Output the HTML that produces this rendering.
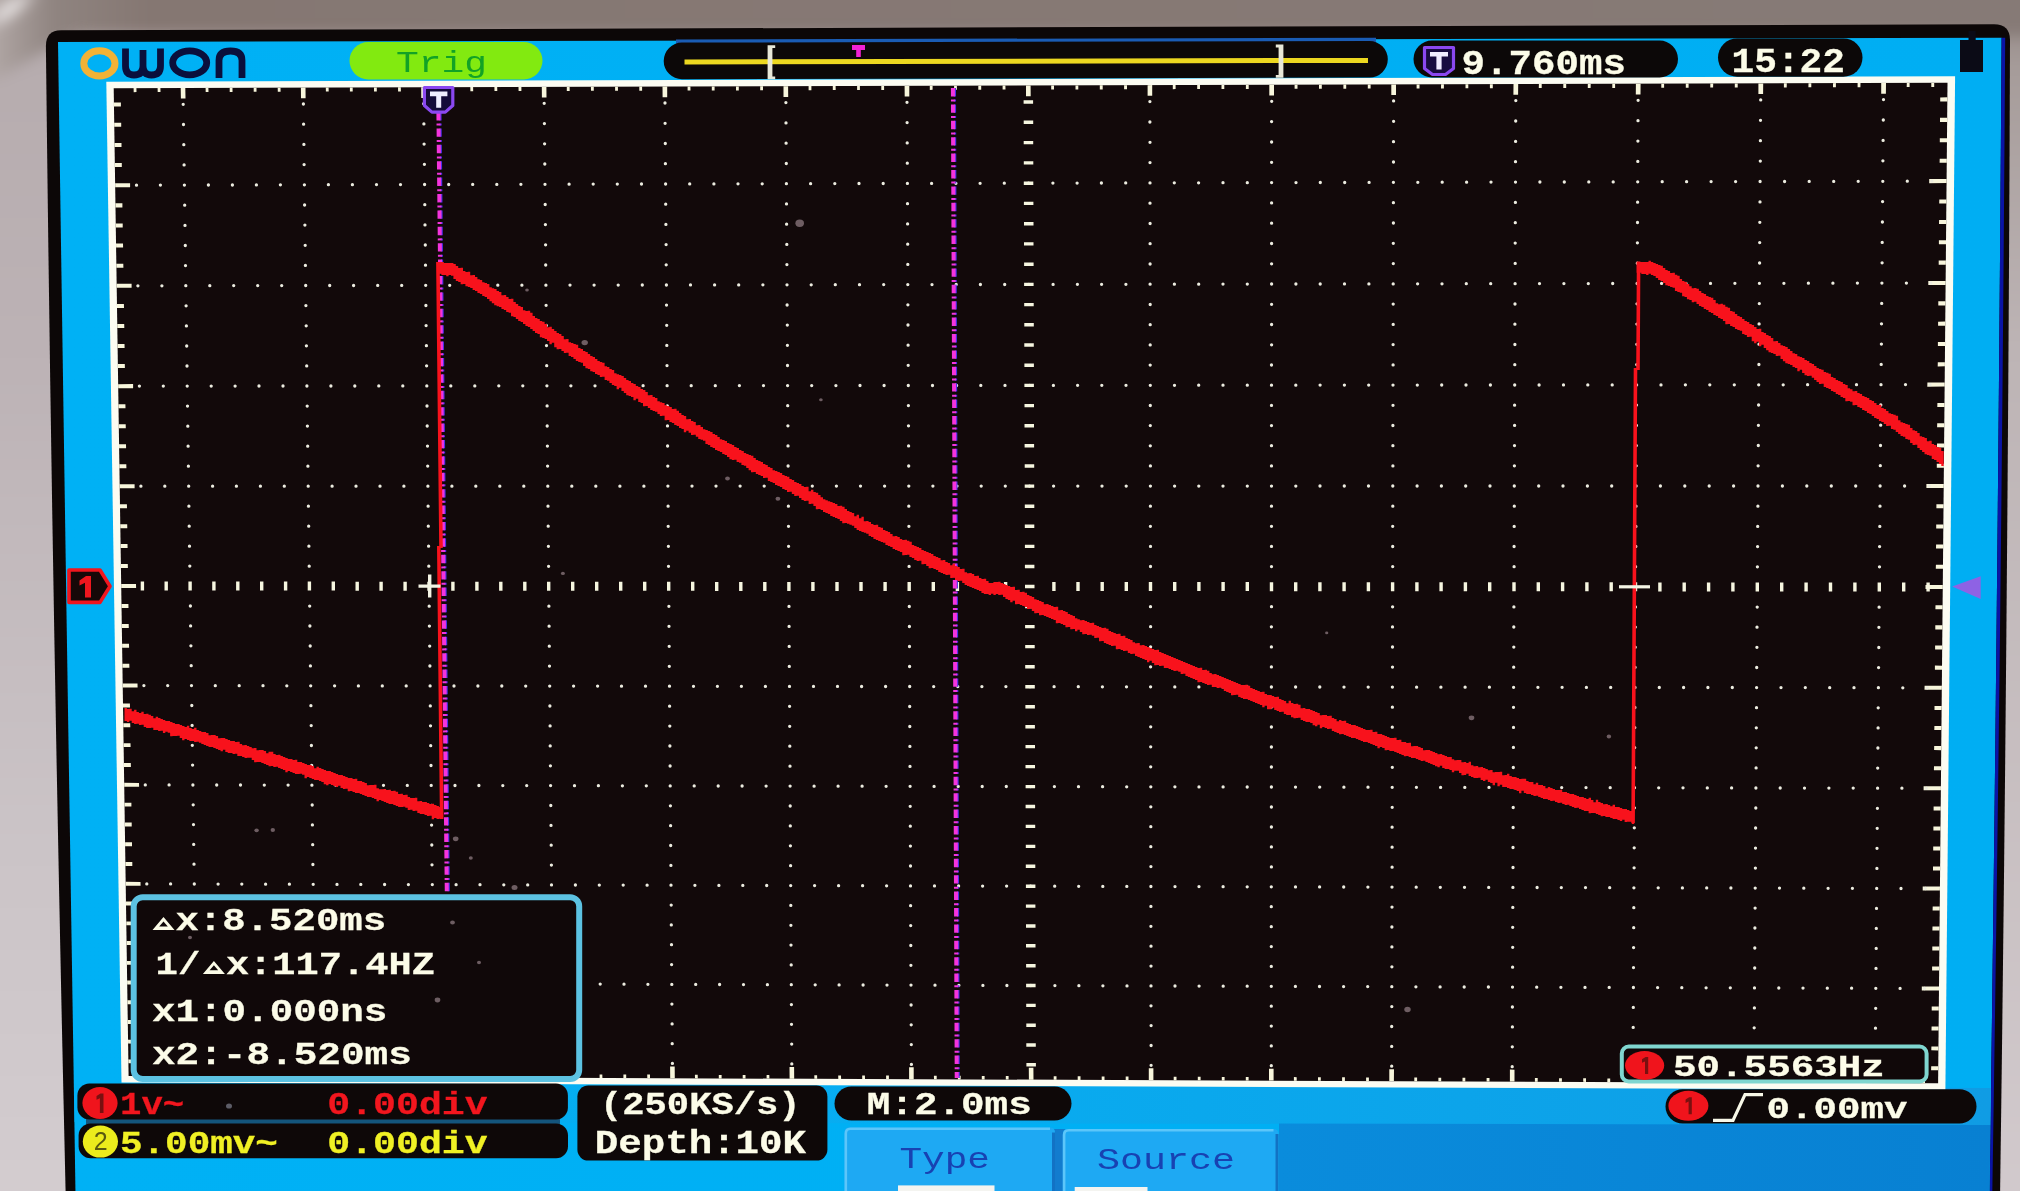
<!DOCTYPE html>
<html><head><meta charset="utf-8"><title>OWON oscilloscope</title>
<style>html,body{margin:0;padding:0;background:#c4bbbe;overflow:hidden}body{width:2020px;height:1191px;font-family:"Liberation Sans",sans-serif}svg{display:block}</style>
</head><body>
<svg width="2020" height="1191" viewBox="0 0 2020 1191">
<defs>
<linearGradient id="gtop" x1="0" y1="0" x2="1" y2="0"><stop offset="0" stop-color="#c9c1c1"/><stop offset="0.018" stop-color="#aea4a2"/><stop offset="0.045" stop-color="#8f8480"/><stop offset="0.09" stop-color="#857772"/><stop offset="1" stop-color="#867a76"/></linearGradient>
<linearGradient id="gleft" x1="0" y1="0" x2="0" y2="1"><stop offset="0" stop-color="#a39a99"/><stop offset="0.07" stop-color="#b6acae"/><stop offset="0.3" stop-color="#bcb2b5"/><stop offset="0.7" stop-color="#cbc4c7"/><stop offset="1" stop-color="#d4cdd0"/></linearGradient>
<linearGradient id="gright" x1="0" y1="0" x2="0" y2="1"><stop offset="0" stop-color="#8a7f7b"/><stop offset="0.08" stop-color="#a69c9a"/><stop offset="0.3" stop-color="#bdb4b5"/><stop offset="1" stop-color="#d2cacd"/></linearGradient>
<linearGradient id="gblue" x1="0" y1="0" x2="1" y2="0"><stop offset="0" stop-color="#00b1f5"/><stop offset="1" stop-color="#00aef3"/></linearGradient>
<linearGradient id="gband" x1="0" y1="0" x2="1" y2="0"><stop offset="0" stop-color="#00b0f4"/><stop offset="0.45" stop-color="#08acf0"/><stop offset="1" stop-color="#109ce4"/></linearGradient>
<linearGradient id="gmenu" x1="0" y1="0" x2="1" y2="0"><stop offset="0" stop-color="#0a8cdc"/><stop offset="1" stop-color="#0880d2"/></linearGradient>
<radialGradient id="ghl" cx="0.5" cy="0.5" r="0.5"><stop offset="0" stop-color="#fbf9f9"/><stop offset="0.45" stop-color="#e4dfdf" stop-opacity="0.85"/><stop offset="1" stop-color="#c0b8b8" stop-opacity="0"/></radialGradient>
<filter id="soft" color-interpolation-filters="sRGB" x="0" y="0" width="100%" height="100%" filterUnits="userSpaceOnUse"><feGaussianBlur stdDeviation="0.65"/></filter>
<filter id="bgblur" color-interpolation-filters="sRGB" x="-5%" y="-5%" width="110%" height="110%"><feGaussianBlur stdDeviation="7"/></filter>
</defs>
<rect width="2020" height="1191" fill="#c4bbbe"/>
<g filter="url(#bgblur)">
<rect x="-30" y="-30" width="110" height="1260" fill="url(#gleft)"/>
<rect x="1985" y="-30" width="70" height="1260" fill="url(#gright)"/>
<path d="M-40,-40 H2060 V36 H70 L-40,100Z" fill="url(#gtop)"/>
<ellipse cx="10" cy="9" rx="40" ry="11" fill="url(#ghl)" transform="rotate(-36 10 9)"/>
</g>
<g filter="url(#soft)">
<path d="M45.9,46 Q45.9,30.4 61,30.3 L1994,24.3 Q2010,24.3 2010,40 Q2008,620 2000,1200 L65.8,1200 Q52.2,615 45.9,46Z" fill="#0c0707"/>
<path d="M58,42 L2001.6,37.8 Q1998,600 1989.5,1200 L75.6,1200 L66.3,600Z" fill="url(#gblue)"/>
<path d="M2001.6,37.8 L2005.2,37.8 Q2001.8,600 1992.2,1200 L1989.5,1200 Q1998,600 2001.6,37.8Z" fill="#0a14a4"/>
<path d="M74,1084 L1991,1088 L1990.4,1125 L74.6,1122Z" fill="url(#gband)"/>
<path d="M1279,1123.4 L1990.4,1125 L1989.5,1200 L1279,1200Z" fill="url(#gmenu)"/>
<polygon points="106.3,81.7 1955.1,76.3 1945.4,1089.7 121.5,1082.4" fill="#fcfcf2"/>
<polygon points="113.7,88.2 1947.5,82.8 1938.1,1083.3 128.6,1076.1" fill="#12090a"/>
<path d="M133.6,88.1 136.4,88.1 136.5,92.1 133.7,92.2ZM148.3,1076.2 151,1076.2 151,1072.7 148.2,1072.6ZM157.6,88 160.4,88 160.5,92.1 157.7,92.1ZM172,1076.3 174.7,1076.3 174.7,1072.7 171.9,1072.7ZM180.7,88 185.3,88 185.5,98.6 180.9,98.6ZM194.8,1076.4 199.3,1076.4 199.1,1064.6 194.6,1064.6ZM205.6,87.9 208.4,87.9 208.5,91.9 205.7,91.9ZM219.4,1076.5 222.1,1076.5 222.1,1072.9 219.3,1072.9ZM229.7,87.8 232.5,87.8 232.5,91.9 229.7,91.9ZM243.1,1076.6 245.8,1076.6 245.8,1073 243,1073ZM253.7,87.8 256.5,87.8 256.5,91.8 253.7,91.8ZM266.8,1076.7 269.5,1076.7 269.5,1073.1 266.7,1073.1ZM277.7,87.7 280.5,87.7 280.6,91.7 277.8,91.7ZM290.5,1076.7 293.3,1076.8 293.2,1073.2 290.5,1073.2ZM300.9,87.6 305.5,87.6 305.6,98.2 301,98.2ZM313.3,1076.8 317.9,1076.9 317.7,1065 313.2,1065ZM325.8,87.6 328.6,87.5 328.7,91.6 325.9,91.6ZM338,1076.9 340.7,1076.9 340.7,1073.4 337.9,1073.4ZM349.9,87.5 352.7,87.5 352.7,91.5 349.9,91.5ZM361.7,1077 364.5,1077 364.4,1073.5 361.7,1073.5ZM374,87.4 376.8,87.4 376.8,91.5 374,91.5ZM385.5,1077.1 388.2,1077.1 388.2,1073.6 385.4,1073.6ZM398,87.3 400.8,87.3 400.9,91.4 398.1,91.4ZM409.2,1077.2 412,1077.2 412,1073.7 409.2,1073.7ZM421.2,87.3 425.8,87.3 425.9,97.9 421.3,97.9ZM432.1,1077.3 436.7,1077.3 436.5,1065.5 432,1065.5ZM446.2,87.2 449,87.2 449.1,91.2 446.3,91.3ZM456.8,1077.4 459.5,1077.4 459.5,1073.9 456.7,1073.9ZM470.3,87.1 473.1,87.1 473.2,91.2 470.4,91.2ZM480.6,1077.5 483.3,1077.5 483.3,1074 480.5,1073.9ZM494.4,87.1 497.2,87.1 497.3,91.1 494.5,91.1ZM504.3,1077.6 507.1,1077.6 507.1,1074.1 504.3,1074ZM518.5,87 521.4,87 521.4,91 518.6,91ZM528.1,1077.7 530.9,1077.7 530.9,1074.1 528.1,1074.1ZM541.8,86.9 546.4,86.9 546.5,97.5 541.9,97.6ZM551.1,1077.8 555.6,1077.8 555.5,1066 551,1065.9ZM566.8,86.9 569.6,86.8 569.7,90.9 566.8,90.9ZM575.8,1077.9 578.5,1077.9 578.5,1074.3 575.7,1074.3ZM590.9,86.8 593.8,86.8 593.8,90.8 591,90.8ZM599.6,1078 602.4,1078 602.3,1074.4 599.6,1074.4ZM615.1,86.7 617.9,86.7 618,90.8 615.1,90.8ZM623.4,1078.1 626.2,1078.1 626.2,1074.5 623.4,1074.5ZM639.3,86.6 642.1,86.6 642.1,90.7 639.3,90.7ZM647.3,1078.2 650,1078.2 650,1074.6 647.2,1074.6ZM662.5,86.6 667.2,86.6 667.2,97.2 662.6,97.2ZM670.2,1078.2 674.8,1078.3 674.7,1066.4 670.1,1066.4ZM687.6,86.5 690.4,86.5 690.5,90.5 687.6,90.6ZM695,1078.3 697.8,1078.4 697.7,1074.8 694.9,1074.8ZM711.8,86.4 714.6,86.4 714.6,90.5 711.8,90.5ZM718.8,1078.4 721.6,1078.4 721.6,1074.9 718.8,1074.9ZM736,86.4 738.8,86.4 738.8,90.4 736,90.4ZM742.7,1078.5 745.5,1078.5 745.5,1075 742.7,1075ZM760.2,86.3 763,86.3 763,90.3 760.2,90.3ZM766.6,1078.6 769.4,1078.6 769.3,1075.1 766.6,1075.1ZM783.5,86.2 788.1,86.2 788.2,96.9 783.5,96.9ZM789.6,1078.7 794.2,1078.7 794.1,1066.9 789.5,1066.9ZM808.6,86.1 811.4,86.1 811.4,90.2 808.6,90.2ZM814.4,1078.8 817.2,1078.8 817.1,1075.3 814.3,1075.3ZM832.8,86.1 835.6,86.1 835.7,90.1 832.8,90.1ZM838.3,1078.9 841.1,1078.9 841,1075.4 838.2,1075.4ZM857.1,86 859.9,86 859.9,90.1 857.1,90.1ZM862.2,1079 865,1079 864.9,1075.5 862.2,1075.4ZM881.3,85.9 884.1,85.9 884.1,90 881.3,90ZM886.1,1079.1 888.9,1079.1 888.9,1075.6 886.1,1075.5ZM904.6,85.9 909.3,85.9 909.3,96.5 904.7,96.5ZM909.1,1079.2 913.7,1079.2 913.7,1067.3 909.1,1067.3ZM929.8,85.8 932.6,85.8 932.6,89.8 929.8,89.9ZM934,1079.3 936.7,1079.3 936.7,1075.7 933.9,1075.7ZM954.1,85.7 956.9,85.7 956.9,89.8 954.1,89.8ZM957.9,1079.4 960.7,1079.4 960.7,1075.8 957.9,1075.8ZM978.3,85.7 981.2,85.6 981.2,89.7 978.3,89.7ZM981.8,1079.5 984.6,1079.5 984.6,1075.9 981.8,1075.9ZM1002.6,85.6 1005.4,85.6 1005.5,89.6 1002.6,89.6ZM1005.8,1079.6 1008.6,1079.6 1008.6,1076 1005.8,1076ZM1026,85.5 1030.6,85.5 1030.7,96.2 1026,96.2ZM1028.9,1079.7 1033.5,1079.7 1033.4,1067.8 1028.8,1067.8ZM1051.2,85.4 1054,85.4 1054,89.5 1051.2,89.5ZM1053.7,1079.8 1056.5,1079.8 1056.5,1076.2 1053.7,1076.2ZM1075.5,85.4 1078.3,85.4 1078.3,89.4 1075.5,89.4ZM1077.7,1079.9 1080.5,1079.9 1080.5,1076.3 1077.7,1076.3ZM1099.8,85.3 1102.7,85.3 1102.7,89.4 1099.8,89.4ZM1101.7,1079.9 1104.5,1080 1104.5,1076.4 1101.7,1076.4ZM1124.1,85.2 1127,85.2 1127,89.3 1124.1,89.3ZM1125.7,1080 1128.5,1080.1 1128.5,1076.5 1125.7,1076.5ZM1147.6,85.2 1152.2,85.1 1152.2,95.8 1147.6,95.8ZM1148.8,1080.1 1153.4,1080.2 1153.4,1068.3 1148.8,1068.2ZM1172.8,85.1 1175.6,85.1 1175.6,89.1 1172.8,89.2ZM1173.7,1080.2 1176.5,1080.2 1176.5,1076.7 1173.7,1076.7ZM1197.2,85 1200,85 1200,89.1 1197.2,89.1ZM1197.8,1080.3 1200.6,1080.3 1200.6,1076.8 1197.8,1076.8ZM1221.5,84.9 1224.3,84.9 1224.3,89 1221.5,89ZM1221.8,1080.4 1224.6,1080.4 1224.6,1076.9 1221.8,1076.9ZM1245.9,84.9 1248.7,84.9 1248.7,88.9 1245.9,88.9ZM1245.8,1080.5 1248.6,1080.5 1248.6,1077 1245.8,1077ZM1269.3,84.8 1274,84.8 1274,95.5 1269.3,95.5ZM1269,1080.6 1273.6,1080.6 1273.6,1068.7 1269,1068.7ZM1294.6,84.7 1297.5,84.7 1297.5,88.8 1294.6,88.8ZM1293.9,1080.7 1296.7,1080.7 1296.7,1077.2 1293.9,1077.1ZM1319,84.7 1321.8,84.6 1321.8,88.7 1319,88.7ZM1318,1080.8 1320.8,1080.8 1320.8,1077.2 1318,1077.2ZM1343.4,84.6 1346.2,84.6 1346.2,88.7 1343.4,88.7ZM1342.1,1080.9 1344.9,1080.9 1344.9,1077.3 1342.1,1077.3ZM1367.8,84.5 1370.6,84.5 1370.6,88.6 1367.8,88.6ZM1366.1,1081 1368.9,1081 1368.9,1077.4 1366.1,1077.4ZM1391.3,84.4 1396,84.4 1396,95.1 1391.3,95.1ZM1389.3,1081.1 1393.9,1081.1 1394,1069.2 1389.3,1069.2ZM1416.6,84.4 1419.5,84.4 1419.5,88.4 1416.6,88.4ZM1414.3,1081.2 1417.1,1081.2 1417.1,1077.6 1414.3,1077.6ZM1441.1,84.3 1443.9,84.3 1443.9,88.4 1441,88.4ZM1438.4,1081.3 1441.2,1081.3 1441.2,1077.7 1438.4,1077.7ZM1465.5,84.2 1468.3,84.2 1468.3,88.3 1465.5,88.3ZM1462.5,1081.4 1465.3,1081.4 1465.3,1077.8 1462.5,1077.8ZM1489.9,84.2 1492.8,84.2 1492.8,88.2 1489.9,88.2ZM1486.6,1081.5 1489.5,1081.5 1489.5,1077.9 1486.6,1077.9ZM1513.5,84.1 1518.2,84.1 1518.1,94.8 1513.4,94.8ZM1509.9,1081.6 1514.5,1081.6 1514.5,1069.7 1509.9,1069.6ZM1538.9,84 1541.7,84 1541.7,88.1 1538.8,88.1ZM1534.9,1081.7 1537.7,1081.7 1537.7,1078.1 1534.9,1078.1ZM1563.3,83.9 1566.2,83.9 1566.2,88 1563.3,88ZM1559,1081.8 1561.9,1081.8 1561.9,1078.2 1559.1,1078.2ZM1587.8,83.9 1590.7,83.9 1590.6,87.9 1587.8,88ZM1583.2,1081.8 1586,1081.9 1586,1078.3 1583.2,1078.3ZM1612.3,83.8 1615.1,83.8 1615.1,87.9 1612.3,87.9ZM1607.3,1081.9 1610.2,1082 1610.2,1078.4 1607.4,1078.4ZM1635.9,83.7 1640.6,83.7 1640.5,94.4 1635.8,94.5ZM1630.6,1082 1635.2,1082.1 1635.3,1070.1 1630.7,1070.1ZM1661.3,83.7 1664.1,83.7 1664.1,87.7 1661.3,87.7ZM1655.7,1082.1 1658.5,1082.1 1658.5,1078.6 1655.7,1078.6ZM1685.8,83.6 1688.6,83.6 1688.6,87.7 1685.8,87.7ZM1679.9,1082.2 1682.7,1082.2 1682.7,1078.7 1679.9,1078.7ZM1710.3,83.5 1713.2,83.5 1713.1,87.6 1710.3,87.6ZM1704.1,1082.3 1706.9,1082.3 1706.9,1078.8 1704.1,1078.7ZM1734.8,83.4 1737.7,83.4 1737.7,87.5 1734.8,87.5ZM1728.3,1082.4 1731.1,1082.4 1731.1,1078.9 1728.3,1078.8ZM1758.4,83.4 1763.2,83.4 1763.1,94.1 1758.4,94.1ZM1751.5,1082.5 1756.2,1082.5 1756.3,1070.6 1751.6,1070.6ZM1783.9,83.3 1786.8,83.3 1786.7,87.4 1783.9,87.4ZM1776.7,1082.6 1779.5,1082.6 1779.5,1079 1776.7,1079ZM1808.5,83.2 1811.3,83.2 1811.3,87.3 1808.4,87.3ZM1800.9,1082.7 1803.7,1082.7 1803.7,1079.1 1800.9,1079.1ZM1833,83.2 1835.9,83.1 1835.9,87.2 1833,87.2ZM1825.1,1082.8 1827.9,1082.8 1828,1079.2 1825.2,1079.2ZM1857.6,83.1 1860.5,83.1 1860.4,87.2 1857.6,87.2ZM1849.4,1082.9 1852.2,1082.9 1852.2,1079.3 1849.4,1079.3ZM1881.2,83 1886,83 1885.9,93.7 1881.2,93.8ZM1872.7,1083 1877.3,1083 1877.4,1071.1 1872.8,1071ZM1906.8,82.9 1909.6,82.9 1909.6,87 1906.7,87ZM1897.9,1083.1 1900.7,1083.1 1900.7,1079.5 1897.9,1079.5ZM1931.3,82.9 1934.2,82.9 1934.2,87 1931.3,87ZM1922.1,1083.2 1925,1083.2 1925,1079.6 1922.2,1079.6ZM113.9,102.5 120.9,102.5 120.9,106.5 113.9,106.6ZM1947.4,97.3 1940.2,97.4 1940.2,101.5 1947.4,101.4ZM114.2,122.7 121.2,122.7 121.2,126.7 114.2,126.7ZM1947.2,117.8 1940,117.8 1940,121.9 1947.2,121.9ZM114.5,142.9 121.5,142.9 121.5,146.9 114.5,146.9ZM1947,138.2 1939.8,138.2 1939.8,142.3 1947,142.3ZM114.8,163 121.8,163 121.8,167.1 114.9,167.1ZM1946.8,158.7 1939.7,158.7 1939.6,162.8 1946.8,162.7ZM115.1,183.2 130.1,183.2 130.1,187.2 115.2,187.2ZM1946.6,179.1 1929.2,179.1 1929.2,183.2 1946.6,183.1ZM115.4,203.3 122.4,203.3 122.4,207.4 115.5,207.4ZM1946.4,199.5 1939.3,199.5 1939.2,203.6 1946.4,203.5ZM115.7,223.5 122.7,223.5 122.7,227.5 115.8,227.5ZM1946.2,219.9 1939.1,219.9 1939,224 1946.2,223.9ZM116,243.6 123,243.6 123.1,247.6 116.1,247.6ZM1946.1,240.2 1938.9,240.3 1938.9,244.3 1946,244.3ZM116.3,263.7 123.3,263.7 123.4,267.7 116.4,267.7ZM1945.9,260.6 1938.7,260.6 1938.7,264.7 1945.8,264.7ZM116.6,283.8 131.6,283.8 131.6,287.8 116.7,287.8ZM1945.7,281 1928.3,281 1928.3,285.1 1945.6,285ZM116.9,303.9 123.9,303.9 124,307.9 117,307.9ZM1945.5,301.3 1938.3,301.3 1938.3,305.4 1945.4,305.4ZM117.2,324 124.2,324 124.3,328 117.3,328ZM1945.3,321.6 1938.1,321.7 1938.1,325.7 1945.2,325.7ZM117.5,344.1 124.5,344 124.6,348.1 117.6,348.1ZM1945.1,342 1937.9,342 1937.9,346 1945.1,346ZM117.8,364.1 124.8,364.1 124.9,368.1 117.9,368.1ZM1944.9,362.3 1937.8,362.3 1937.7,366.4 1944.9,366.3ZM118.1,384.2 133.1,384.1 133.1,388.2 118.2,388.2ZM1944.7,382.6 1927.4,382.6 1927.3,386.7 1944.7,386.6ZM118.4,404.2 125.4,404.2 125.5,408.2 118.5,408.2ZM1944.5,402.9 1937.4,402.9 1937.3,406.9 1944.5,406.9ZM118.7,424.2 125.7,424.2 125.8,428.2 118.8,428.2ZM1944.3,423.2 1937.2,423.2 1937.1,427.2 1944.3,427.2ZM119,444.2 126,444.2 126.1,448.2 119.1,448.2ZM1944.1,443.4 1937,443.4 1937,447.5 1944.1,447.5ZM119.3,464.2 126.3,464.2 126.4,468.2 119.4,468.2ZM1943.9,463.7 1936.8,463.7 1936.8,467.7 1943.9,467.7ZM119.6,484.2 134.6,484.2 134.6,488.2 119.7,488.2ZM1943.8,483.9 1926.4,483.9 1926.4,488 1943.7,488ZM119.9,504.2 126.9,504.2 127,508.2 120,508.2ZM1943.6,504.2 1936.4,504.2 1936.4,508.2 1943.5,508.2ZM120.2,524.2 127.2,524.2 127.3,528.2 120.3,528.2ZM1943.4,524.4 1936.2,524.4 1936.2,528.4 1943.3,528.4ZM120.6,544.1 127.5,544.1 127.6,548.1 120.6,548.1ZM1943.2,544.6 1936.1,544.6 1936,548.6 1943.1,548.6ZM120.9,564.1 127.8,564.1 127.9,568.1 120.9,568.1ZM1943,564.8 1935.9,564.8 1935.8,568.8 1943,568.8ZM121.2,584 136,584 136.1,588 121.2,588ZM1942.8,585 1925.5,585 1925.5,589 1942.8,589ZM121.5,604 128.4,604 128.5,608 121.5,607.9ZM1942.6,605.2 1935.5,605.2 1935.4,609.2 1942.6,609.2ZM121.8,623.9 128.7,623.9 128.8,627.9 121.8,627.9ZM1942.4,625.3 1935.3,625.3 1935.3,629.4 1942.4,629.4ZM122.1,643.8 129,643.8 129.1,647.8 122.1,647.8ZM1942.2,645.5 1935.1,645.5 1935.1,649.5 1942.2,649.5ZM122.4,663.7 129.3,663.7 129.4,667.7 122.4,667.7ZM1942,665.7 1934.9,665.6 1934.9,669.7 1942,669.7ZM122.7,683.6 137.5,683.6 137.6,687.6 122.7,687.5ZM1941.9,685.8 1924.6,685.8 1924.5,689.8 1941.8,689.8ZM123,703.4 129.9,703.5 130,707.4 123,707.4ZM1941.7,705.9 1934.5,705.9 1934.5,709.9 1941.6,709.9ZM123.3,723.3 130.2,723.3 130.3,727.3 123.3,727.3ZM1941.5,726 1934.4,726 1934.3,730 1941.4,730.1ZM123.6,743.2 130.5,743.2 130.6,747.1 123.6,747.1ZM1941.3,746.1 1934.2,746.1 1934.1,750.1 1941.2,750.2ZM123.9,763 130.8,763 130.9,767 123.9,767ZM1941.1,766.2 1934,766.2 1933.9,770.2 1941.1,770.2ZM124.2,782.8 139,782.9 139.1,786.8 124.2,786.8ZM1940.9,786.3 1923.6,786.3 1923.6,790.3 1940.9,790.3ZM124.5,802.7 131.4,802.7 131.4,806.6 124.5,806.6ZM1940.7,806.4 1933.6,806.4 1933.6,810.4 1940.7,810.4ZM124.8,822.5 131.7,822.5 131.7,826.5 124.8,826.4ZM1940.5,826.4 1933.4,826.4 1933.4,830.4 1940.5,830.5ZM125.1,842.3 132,842.3 132,846.3 125.1,846.2ZM1940.3,846.5 1933.2,846.5 1933.2,850.5 1940.3,850.5ZM125.4,862.1 132.3,862.1 132.3,866 125.4,866ZM1940.1,866.5 1933,866.5 1933,870.5 1940.1,870.5ZM125.7,881.8 140.5,881.9 140.6,885.8 125.7,885.8ZM1940,886.6 1922.7,886.5 1922.7,890.5 1939.9,890.6ZM126,901.6 132.9,901.6 132.9,905.6 126,905.6ZM1939.8,906.6 1932.7,906.6 1932.6,910.6 1939.7,910.6ZM126.3,921.4 133.2,921.4 133.2,925.3 126.3,925.3ZM1939.6,926.6 1932.5,926.6 1932.4,930.6 1939.5,930.6ZM126.6,941.1 133.5,941.1 133.5,945.1 126.6,945.1ZM1939.4,946.6 1932.3,946.6 1932.3,950.6 1939.4,950.6ZM126.8,960.9 133.8,960.9 133.8,964.8 126.9,964.8ZM1939.2,966.6 1932.1,966.5 1932.1,970.5 1939.2,970.6ZM127.1,980.6 142,980.6 142,984.6 127.2,984.5ZM1939,986.5 1921.8,986.5 1921.8,990.5 1939,990.5ZM127.4,1000.3 134.4,1000.3 134.4,1004.3 127.5,1004.2ZM1938.8,1006.5 1931.7,1006.5 1931.7,1010.5 1938.8,1010.5ZM127.7,1020 134.7,1020 134.7,1024 127.8,1023.9ZM1938.6,1026.4 1931.6,1026.4 1931.5,1030.4 1938.6,1030.4ZM128,1039.7 134.9,1039.7 135,1043.7 128.1,1043.6ZM1938.4,1046.4 1931.4,1046.4 1931.3,1050.3 1938.4,1050.4ZM128.3,1059.4 135.2,1059.4 135.3,1063.3 128.4,1063.3ZM1938.3,1066.3 1931.2,1066.3 1931.1,1070.3 1938.2,1070.3Z" fill="#f8f6dc"/>
<path d="M136.5,185.2h0M160.4,185.1h0M184.4,185.1h0M208.4,185h0M232.4,185h0M256.4,184.9h0M280.4,184.8h0M304.4,184.8h0M328.4,184.7h0M352.4,184.7h0M376.5,184.6h0M400.5,184.6h0M424.6,184.5h0M448.7,184.5h0M472.7,184.4h0M496.8,184.4h0M520.9,184.3h0M545,184.3h0M569.1,184.2h0M593.2,184.1h0M617.3,184.1h0M641.5,184h0M665.6,184h0M689.7,183.9h0M713.9,183.9h0M738,183.8h0M762.2,183.8h0M786.4,183.7h0M810.6,183.7h0M834.8,183.6h0M859,183.5h0M883.2,183.5h0M907.4,183.4h0M931.6,183.4h0M955.9,183.3h0M980.1,183.3h0M1004.3,183.2h0M1028.6,183.2h0M1052.9,183.1h0M1077.1,183.1h0M1101.4,183h0M1125.7,182.9h0M1150,182.9h0M1174.3,182.8h0M1198.6,182.8h0M1223,182.7h0M1247.3,182.7h0M1271.6,182.6h0M1296,182.6h0M1320.3,182.5h0M1344.7,182.5h0M1369.1,182.4h0M1393.4,182.3h0M1417.8,182.3h0M1442.2,182.2h0M1466.6,182.2h0M1491,182.1h0M1515.5,182.1h0M1539.9,182h0M1564.3,182h0M1588.8,181.9h0M1613.2,181.9h0M1637.7,181.8h0M1662.2,181.7h0M1686.6,181.7h0M1711.1,181.6h0M1735.6,181.6h0M1760.1,181.5h0M1784.6,181.5h0M1809.2,181.4h0M1833.7,181.4h0M1858.2,181.3h0M1882.8,181.3h0M1907.3,181.2h0M1931.9,181.1h0M137.9,285.8h0M161.9,285.8h0M185.8,285.7h0M209.8,285.7h0M233.7,285.6h0M257.7,285.6h0M281.7,285.6h0M305.7,285.5h0M329.7,285.5h0M353.6,285.5h0M377.7,285.4h0M401.7,285.4h0M425.7,285.3h0M449.7,285.3h0M473.8,285.3h0M497.8,285.2h0M521.9,285.2h0M545.9,285.2h0M570,285.1h0M594.1,285.1h0M618.2,285.1h0M642.3,285h0M666.4,285h0M690.5,284.9h0M714.6,284.9h0M738.7,284.9h0M762.9,284.8h0M787,284.8h0M811.2,284.8h0M835.3,284.7h0M859.5,284.7h0M883.7,284.6h0M907.8,284.6h0M932,284.6h0M956.2,284.5h0M980.4,284.5h0M1004.7,284.5h0M1028.9,284.4h0M1053.1,284.4h0M1077.4,284.3h0M1101.6,284.3h0M1125.9,284.3h0M1150.1,284.2h0M1174.4,284.2h0M1198.7,284.2h0M1223,284.1h0M1247.3,284.1h0M1271.6,284h0M1295.9,284h0M1320.2,284h0M1344.5,283.9h0M1368.9,283.9h0M1393.2,283.9h0M1417.6,283.8h0M1442,283.8h0M1466.3,283.7h0M1490.7,283.7h0M1515.1,283.7h0M1539.5,283.6h0M1563.9,283.6h0M1588.3,283.6h0M1612.7,283.5h0M1637.1,283.5h0M1661.6,283.4h0M1686,283.4h0M1710.5,283.4h0M1734.9,283.3h0M1759.4,283.3h0M1783.9,283.3h0M1808.4,283.2h0M1832.9,283.2h0M1857.4,283.1h0M1881.9,283.1h0M1906.4,283.1h0M1930.9,283h0M139.4,386.1h0M163.3,386.1h0M187.2,386.1h0M211.2,386.1h0M235.1,386.1h0M259,386h0M283,386h0M306.9,386h0M330.9,386h0M354.8,386h0M378.8,385.9h0M402.8,385.9h0M426.8,385.9h0M450.8,385.9h0M474.8,385.9h0M498.8,385.8h0M522.8,385.8h0M546.9,385.8h0M570.9,385.8h0M595,385.8h0M619,385.7h0M643.1,385.7h0M667.1,385.7h0M691.2,385.7h0M715.3,385.7h0M739.4,385.6h0M763.5,385.6h0M787.6,385.6h0M811.7,385.6h0M835.9,385.6h0M860,385.5h0M884.1,385.5h0M908.3,385.5h0M932.5,385.5h0M956.6,385.5h0M980.8,385.4h0M1005,385.4h0M1029.2,385.4h0M1053.4,385.4h0M1077.6,385.3h0M1101.8,385.3h0M1126,385.3h0M1150.3,385.3h0M1174.5,385.3h0M1198.7,385.2h0M1223,385.2h0M1247.3,385.2h0M1271.5,385.2h0M1295.8,385.2h0M1320.1,385.1h0M1344.4,385.1h0M1368.7,385.1h0M1393,385.1h0M1417.3,385.1h0M1441.7,385h0M1466,385h0M1490.4,385h0M1514.7,385h0M1539.1,385h0M1563.5,384.9h0M1587.8,384.9h0M1612.2,384.9h0M1636.6,384.9h0M1661,384.9h0M1685.4,384.8h0M1709.8,384.8h0M1734.3,384.8h0M1758.7,384.8h0M1783.2,384.8h0M1807.6,384.7h0M1832.1,384.7h0M1856.5,384.7h0M1881,384.7h0M1905.5,384.6h0M1930,384.6h0M140.9,486.2h0M164.8,486.2h0M188.7,486.2h0M212.6,486.2h0M236.4,486.2h0M260.4,486.2h0M284.3,486.2h0M308.2,486.2h0M332.1,486.2h0M356,486.2h0M380,486.2h0M403.9,486.2h0M427.9,486.2h0M451.9,486.2h0M475.8,486.2h0M499.8,486.2h0M523.8,486.2h0M547.8,486.2h0M571.8,486.2h0M595.8,486.2h0M619.9,486.2h0M643.9,486.2h0M667.9,486.1h0M692,486.1h0M716,486.1h0M740.1,486.1h0M764.2,486.1h0M788.2,486.1h0M812.3,486.1h0M836.4,486.1h0M860.5,486.1h0M884.6,486.1h0M908.8,486.1h0M932.9,486.1h0M957,486.1h0M981.2,486.1h0M1005.3,486.1h0M1029.5,486.1h0M1053.6,486.1h0M1077.8,486.1h0M1102,486.1h0M1126.2,486.1h0M1150.4,486.1h0M1174.6,486.1h0M1198.8,486.1h0M1223,486.1h0M1247.3,486.1h0M1271.5,486.1h0M1295.8,486.1h0M1320,486h0M1344.3,486h0M1368.5,486h0M1392.8,486h0M1417.1,486h0M1441.4,486h0M1465.7,486h0M1490,486h0M1514.3,486h0M1538.7,486h0M1563,486h0M1587.4,486h0M1611.7,486h0M1636.1,486h0M1660.4,486h0M1684.8,486h0M1709.2,486h0M1733.6,486h0M1758,486h0M1782.4,486h0M1806.8,486h0M1831.3,486h0M1855.7,486h0M1880.1,486h0M1904.6,486h0M1929.1,486h0M143.9,685.6h0M167.7,685.6h0M191.5,685.6h0M215.3,685.7h0M239.2,685.7h0M263,685.7h0M286.8,685.8h0M310.7,685.8h0M334.6,685.8h0M358.4,685.9h0M382.3,685.9h0M406.2,685.9h0M430.1,685.9h0M454,686h0M477.9,686h0M501.8,686h0M525.7,686.1h0M549.7,686.1h0M573.6,686.1h0M597.6,686.1h0M621.5,686.2h0M645.5,686.2h0M669.5,686.2h0M693.5,686.3h0M717.4,686.3h0M741.4,686.3h0M765.4,686.4h0M789.5,686.4h0M813.5,686.4h0M837.5,686.4h0M861.6,686.5h0M885.6,686.5h0M909.7,686.5h0M933.7,686.6h0M957.8,686.6h0M981.9,686.6h0M1005.9,686.6h0M1030,686.7h0M1054.1,686.7h0M1078.3,686.7h0M1102.4,686.8h0M1126.5,686.8h0M1150.6,686.8h0M1174.8,686.9h0M1198.9,686.9h0M1223.1,686.9h0M1247.2,686.9h0M1271.4,687h0M1295.6,687h0M1319.8,687h0M1344,687.1h0M1368.2,687.1h0M1392.4,687.1h0M1416.6,687.2h0M1440.9,687.2h0M1465.1,687.2h0M1489.4,687.2h0M1513.6,687.3h0M1537.9,687.3h0M1562.1,687.3h0M1586.4,687.4h0M1610.7,687.4h0M1635,687.4h0M1659.3,687.5h0M1683.6,687.5h0M1707.9,687.5h0M1732.3,687.5h0M1756.6,687.6h0M1781,687.6h0M1805.3,687.6h0M1829.7,687.7h0M1854,687.7h0M1878.4,687.7h0M1902.8,687.8h0M1927.2,687.8h0M145.3,784.9h0M169.1,784.9h0M192.9,785h0M216.7,785h0M240.5,785h0M264.3,785.1h0M288.1,785.1h0M311.9,785.2h0M335.8,785.2h0M359.6,785.3h0M383.5,785.3h0M407.3,785.4h0M431.2,785.4h0M455,785.5h0M478.9,785.5h0M502.8,785.6h0M526.7,785.6h0M550.6,785.6h0M574.5,785.7h0M598.4,785.7h0M622.4,785.8h0M646.3,785.8h0M670.2,785.9h0M694.2,785.9h0M718.2,786h0M742.1,786h0M766.1,786.1h0M790.1,786.1h0M814.1,786.2h0M838.1,786.2h0M862.1,786.2h0M886.1,786.3h0M910.1,786.3h0M934.1,786.4h0M958.2,786.4h0M982.2,786.5h0M1006.3,786.5h0M1030.3,786.6h0M1054.4,786.6h0M1078.5,786.7h0M1102.6,786.7h0M1126.7,786.8h0M1150.8,786.8h0M1174.9,786.8h0M1199,786.9h0M1223.1,786.9h0M1247.2,787h0M1271.4,787h0M1295.5,787.1h0M1319.7,787.1h0M1343.9,787.2h0M1368,787.2h0M1392.2,787.3h0M1416.4,787.3h0M1440.6,787.4h0M1464.8,787.4h0M1489,787.4h0M1513.2,787.5h0M1537.5,787.5h0M1561.7,787.6h0M1586,787.6h0M1610.2,787.7h0M1634.5,787.7h0M1658.7,787.8h0M1683,787.8h0M1707.3,787.9h0M1731.6,787.9h0M1755.9,788h0M1780.2,788h0M1804.5,788.1h0M1828.9,788.1h0M1853.2,788.1h0M1877.6,788.2h0M1901.9,788.2h0M1926.3,788.3h0M146.8,883.9h0M170.6,883.9h0M194.3,884h0M218.1,884.1h0M241.8,884.1h0M265.6,884.2h0M289.4,884.2h0M313.2,884.3h0M337,884.4h0M360.8,884.4h0M384.6,884.5h0M408.4,884.6h0M432.3,884.6h0M456.1,884.7h0M480,884.7h0M503.8,884.8h0M527.7,884.9h0M551.5,884.9h0M575.4,885h0M599.3,885.1h0M623.2,885.1h0M647.1,885.2h0M671,885.2h0M694.9,885.3h0M718.9,885.4h0M742.8,885.4h0M766.7,885.5h0M790.7,885.6h0M814.6,885.6h0M838.6,885.7h0M862.6,885.7h0M886.6,885.8h0M910.5,885.9h0M934.5,885.9h0M958.6,886h0M982.6,886.1h0M1006.6,886.1h0M1030.6,886.2h0M1054.7,886.2h0M1078.7,886.3h0M1102.8,886.4h0M1126.8,886.4h0M1150.9,886.5h0M1175,886.6h0M1199,886.6h0M1223.1,886.7h0M1247.2,886.8h0M1271.3,886.8h0M1295.5,886.9h0M1319.6,886.9h0M1343.7,887h0M1367.9,887.1h0M1392,887.1h0M1416.2,887.2h0M1440.3,887.3h0M1464.5,887.3h0M1488.7,887.4h0M1512.9,887.4h0M1537.1,887.5h0M1561.3,887.6h0M1585.5,887.6h0M1609.7,887.7h0M1633.9,887.8h0M1658.2,887.8h0M1682.4,887.9h0M1706.7,887.9h0M1730.9,888h0M1755.2,888.1h0M1779.5,888.1h0M1803.8,888.2h0M1828.1,888.3h0M1852.4,888.3h0M1876.7,888.4h0M1901,888.5h0M1925.3,888.5h0M148.3,982.6h0M172,982.7h0M195.7,982.8h0M219.4,982.9h0M243.2,982.9h0M266.9,983h0M290.7,983.1h0M314.4,983.2h0M338.2,983.3h0M362,983.3h0M385.8,983.4h0M409.6,983.5h0M433.4,983.6h0M457.2,983.6h0M481,983.7h0M504.8,983.8h0M528.6,983.9h0M552.5,984h0M576.3,984h0M600.2,984.1h0M624,984.2h0M647.9,984.3h0M671.8,984.4h0M695.7,984.4h0M719.6,984.5h0M743.5,984.6h0M767.4,984.7h0M791.3,984.7h0M815.2,984.8h0M839.1,984.9h0M863.1,985h0M887,985.1h0M911,985.1h0M935,985.2h0M958.9,985.3h0M982.9,985.4h0M1006.9,985.5h0M1030.9,985.5h0M1054.9,985.6h0M1078.9,985.7h0M1102.9,985.8h0M1127,985.9h0M1151,985.9h0M1175,986h0M1199.1,986.1h0M1223.2,986.2h0M1247.2,986.2h0M1271.3,986.3h0M1295.4,986.4h0M1319.5,986.5h0M1343.6,986.6h0M1367.7,986.6h0M1391.8,986.7h0M1415.9,986.8h0M1440.1,986.9h0M1464.2,987h0M1488.4,987h0M1512.5,987.1h0M1536.7,987.2h0M1560.9,987.3h0M1585,987.4h0M1609.2,987.4h0M1633.4,987.5h0M1657.6,987.6h0M1681.8,987.7h0M1706.1,987.8h0M1730.3,987.8h0M1754.5,987.9h0M1778.8,988h0M1803,988.1h0M1827.3,988.2h0M1851.6,988.2h0M1875.8,988.3h0M1900.1,988.4h0M1924.4,988.5h0M183.2,104.3h0M183.5,124.5h0M183.8,144.7h0M184.1,164.9h0M184.7,205.2h0M185,225.4h0M185.3,245.5h0M185.5,265.6h0M186.1,305.8h0M186.4,325.9h0M186.7,346h0M187,366h0M187.5,406.1h0M187.8,426.2h0M188.1,446.2h0M188.4,466.2h0M188.9,506.2h0M189.2,526.2h0M189.5,546.2h0M189.8,566.1h0M190.4,606h0M190.6,625.9h0M190.9,645.8h0M191.2,665.7h0M191.8,705.5h0M192.1,725.4h0M192.3,745.3h0M192.6,765.1h0M193.2,804.8h0M193.5,824.6h0M193.7,844.4h0M194,864.2h0M194.6,903.8h0M194.9,923.5h0M195.2,943.3h0M195.4,963h0M196,1002.5h0M196.3,1022.2h0M196.5,1041.9h0M196.8,1061.6h0M303.4,104h0M303.6,124.2h0M303.9,144.4h0M304.1,164.6h0M304.6,205h0M304.9,225.1h0M305.2,245.3h0M305.4,265.4h0M305.9,305.6h0M306.2,325.8h0M306.4,345.8h0M306.7,365.9h0M307.2,406.1h0M307.4,426.1h0M307.7,446.2h0M307.9,466.2h0M308.4,506.2h0M308.7,526.2h0M308.9,546.2h0M309.2,566.2h0M309.7,606.1h0M309.9,626h0M310.2,646h0M310.4,665.9h0M310.9,705.7h0M311.2,725.6h0M311.4,745.5h0M311.7,765.3h0M312.2,805h0M312.4,824.9h0M312.7,844.7h0M312.9,864.5h0M313.4,904.1h0M313.7,923.9h0M313.9,943.7h0M314.2,963.4h0M314.7,1002.9h0M314.9,1022.6h0M315.2,1042.4h0M315.4,1062.1h0M423.7,103.7h0M423.9,123.9h0M424.1,144.1h0M424.4,164.3h0M424.8,204.7h0M425,224.9h0M425.3,245h0M425.5,265.2h0M425.9,305.5h0M426.1,325.6h0M426.4,345.7h0M426.6,365.8h0M427,406h0M427.2,426h0M427.5,446.1h0M427.7,466.1h0M428.1,506.2h0M428.3,526.2h0M428.6,546.2h0M428.8,566.2h0M429.2,606.2h0M429.4,626.1h0M429.7,646.1h0M429.9,666h0M430.3,705.9h0M430.5,725.8h0M430.7,745.7h0M431,765.5h0M431.4,805.3h0M431.6,825.1h0M431.8,845h0M432,864.8h0M432.5,904.4h0M432.7,924.2h0M432.9,944h0M433.1,963.8h0M433.6,1003.3h0M433.8,1023.1h0M434,1042.8h0M434.2,1062.5h0M544.2,103.3h0M544.4,123.6h0M544.6,143.8h0M544.8,164h0M545.2,204.5h0M545.4,224.6h0M545.6,244.8h0M545.7,265h0M546.1,305.3h0M546.3,325.4h0M546.5,345.6h0M546.7,365.7h0M547.1,405.9h0M547.2,426h0M547.4,446.1h0M547.6,466.1h0M548,506.2h0M548.2,526.2h0M548.4,546.3h0M548.6,566.3h0M548.9,606.2h0M549.1,626.2h0M549.3,646.2h0M549.5,666.1h0M549.9,706h0M550.1,725.9h0M550.2,745.9h0M550.4,765.8h0M550.8,805.5h0M551,825.4h0M551.2,845.2h0M551.4,865.1h0M551.7,904.8h0M551.9,924.6h0M552.1,944.4h0M552.3,964.2h0M552.7,1003.7h0M552.8,1023.5h0M553,1043.2h0M553.2,1063h0M665,103h0M665.1,123.3h0M665.3,143.5h0M665.4,163.7h0M665.7,204.2h0M665.9,224.4h0M666.1,244.6h0M666.2,264.8h0M666.5,305.1h0M666.7,325.3h0M666.8,345.4h0M667,365.6h0M667.3,405.8h0M667.5,425.9h0M667.6,446h0M667.8,466.1h0M668.1,506.2h0M668.2,526.3h0M668.4,546.3h0M668.5,566.3h0M668.9,606.3h0M669,626.3h0M669.2,646.3h0M669.3,666.3h0M669.6,706.2h0M669.8,726.1h0M669.9,746h0M670.1,766h0M670.4,805.8h0M670.6,825.7h0M670.7,845.5h0M670.9,865.4h0M671.2,905.1h0M671.3,924.9h0M671.5,944.7h0M671.6,964.6h0M671.9,1004.1h0M672.1,1023.9h0M672.2,1043.7h0M672.4,1063.4h0M785.9,102.6h0M786,122.9h0M786.1,143.2h0M786.3,163.5h0M786.5,203.9h0M786.6,224.2h0M786.8,244.4h0M786.9,264.6h0M787.1,305h0M787.3,325.1h0M787.4,345.3h0M787.5,365.5h0M787.7,405.7h0M787.9,425.8h0M788,445.9h0M788.1,466h0M788.4,506.2h0M788.5,526.3h0M788.6,546.3h0M788.7,566.4h0M789,606.4h0M789.1,626.4h0M789.2,646.4h0M789.3,666.4h0M789.6,706.3h0M789.7,726.3h0M789.8,746.2h0M790,766.2h0M790.2,806h0M790.3,825.9h0M790.4,845.8h0M790.6,865.7h0M790.8,905.4h0M790.9,925.3h0M791,945.1h0M791.2,964.9h0M791.4,1004.6h0M791.5,1024.3h0M791.7,1044.1h0M791.8,1063.9h0M907,102.3h0M907.1,122.6h0M907.2,142.9h0M907.3,163.2h0M907.5,203.7h0M907.6,223.9h0M907.7,244.2h0M907.8,264.4h0M907.9,304.8h0M908,325h0M908.1,345.2h0M908.2,365.3h0M908.4,405.6h0M908.5,425.8h0M908.6,445.9h0M908.7,466h0M908.8,506.2h0M908.9,526.3h0M909,546.3h0M909.1,566.4h0M909.3,606.5h0M909.4,626.5h0M909.5,646.5h0M909.6,666.5h0M909.7,706.5h0M909.8,726.5h0M909.9,746.4h0M910,766.4h0M910.2,806.3h0M910.3,826.2h0M910.4,846.1h0M910.5,866h0M910.6,905.7h0M910.7,925.6h0M910.8,945.5h0M910.9,965.3h0M911.1,1005h0M911.2,1024.8h0M911.3,1044.6h0M911.4,1064.4h0M1149.9,101.6h0M1149.9,122h0M1150,142.3h0M1150,162.6h0M1150,203.2h0M1150.1,223.5h0M1150.1,243.7h0M1150.1,264h0M1150.2,304.5h0M1150.2,324.7h0M1150.2,344.9h0M1150.2,365.1h0M1150.3,405.5h0M1150.3,425.6h0M1150.3,445.8h0M1150.4,465.9h0M1150.4,506.2h0M1150.4,526.3h0M1150.5,546.4h0M1150.5,566.5h0M1150.5,606.7h0M1150.6,626.7h0M1150.6,646.8h0M1150.6,666.8h0M1150.7,706.8h0M1150.7,726.8h0M1150.7,746.8h0M1150.7,766.8h0M1150.8,806.8h0M1150.8,826.7h0M1150.8,846.7h0M1150.9,866.6h0M1150.9,906.4h0M1150.9,926.3h0M1151,946.2h0M1151,966.1h0M1151,1005.8h0M1151.1,1025.6h0M1151.1,1045.5h0M1151.1,1065.3h0M1271.7,101.3h0M1271.6,121.6h0M1271.6,142h0M1271.6,162.3h0M1271.6,202.9h0M1271.6,223.2h0M1271.6,243.5h0M1271.6,263.8h0M1271.6,304.3h0M1271.6,324.5h0M1271.6,344.8h0M1271.5,365h0M1271.5,405.4h0M1271.5,425.6h0M1271.5,445.7h0M1271.5,465.9h0M1271.5,506.2h0M1271.5,526.3h0M1271.5,546.4h0M1271.5,566.6h0M1271.5,606.7h0M1271.4,626.8h0M1271.4,646.9h0M1271.4,666.9h0M1271.4,707h0M1271.4,727h0M1271.4,747h0M1271.4,767h0M1271.4,807h0M1271.4,827h0M1271.4,846.9h0M1271.4,866.9h0M1271.3,906.7h0M1271.3,926.7h0M1271.3,946.6h0M1271.3,966.4h0M1271.3,1006.2h0M1271.3,1026.1h0M1271.3,1045.9h0M1271.3,1065.7h0M1393.6,100.9h0M1393.6,121.3h0M1393.5,141.7h0M1393.5,162h0M1393.4,202.7h0M1393.4,223h0M1393.3,243.3h0M1393.3,263.6h0M1393.2,304.1h0M1393.2,324.4h0M1393.1,344.6h0M1393.1,364.9h0M1393,405.3h0M1392.9,425.5h0M1392.9,445.7h0M1392.9,465.9h0M1392.8,506.2h0M1392.7,526.3h0M1392.7,546.5h0M1392.7,566.6h0M1392.6,606.8h0M1392.5,626.9h0M1392.5,647h0M1392.5,667.1h0M1392.4,707.2h0M1392.3,727.2h0M1392.3,747.2h0M1392.3,767.3h0M1392.2,807.3h0M1392.1,827.2h0M1392.1,847.2h0M1392.1,867.2h0M1392,907.1h0M1391.9,927h0M1391.9,946.9h0M1391.9,966.8h0M1391.8,1006.6h0M1391.7,1026.5h0M1391.7,1046.4h0M1391.7,1066.2h0M1515.8,100.6h0M1515.7,121h0M1515.6,141.4h0M1515.5,161.7h0M1515.4,202.4h0M1515.3,222.7h0M1515.2,243.1h0M1515.2,263.4h0M1515,304h0M1514.9,324.2h0M1514.9,344.5h0M1514.8,364.7h0M1514.6,405.2h0M1514.6,425.4h0M1514.5,445.6h0M1514.4,465.8h0M1514.3,506.2h0M1514.2,526.4h0M1514.1,546.5h0M1514.1,566.7h0M1513.9,606.9h0M1513.8,627h0M1513.8,647.1h0M1513.7,667.2h0M1513.5,707.3h0M1513.5,727.4h0M1513.4,747.4h0M1513.3,767.5h0M1513.2,807.5h0M1513.1,827.5h0M1513,847.5h0M1513,867.5h0M1512.8,907.4h0M1512.7,927.3h0M1512.7,947.3h0M1512.6,967.2h0M1512.4,1007h0M1512.4,1026.9h0M1512.3,1046.8h0M1512.2,1066.7h0M1638.1,100.3h0M1638,120.7h0M1637.9,141.1h0M1637.8,161.4h0M1637.6,202.2h0M1637.5,222.5h0M1637.4,242.8h0M1637.3,263.2h0M1637,303.8h0M1636.9,324.1h0M1636.8,344.3h0M1636.7,364.6h0M1636.5,405.1h0M1636.4,425.4h0M1636.3,445.6h0M1636.2,465.8h0M1636,506.2h0M1635.9,526.4h0M1635.8,546.5h0M1635.6,566.7h0M1635.4,607h0M1635.3,627.1h0M1635.2,647.2h0M1635.1,667.3h0M1634.9,707.5h0M1634.8,727.6h0M1634.7,747.6h0M1634.6,767.7h0M1634.4,807.8h0M1634.3,827.8h0M1634.2,847.8h0M1634.1,867.8h0M1633.8,907.7h0M1633.7,927.7h0M1633.6,947.6h0M1633.5,967.6h0M1633.3,1007.4h0M1633.2,1027.4h0M1633.1,1047.2h0M1633,1067.1h0M1760.7,99.9h0M1760.5,120.3h0M1760.4,140.7h0M1760.3,161.1h0M1760,201.9h0M1759.8,222.3h0M1759.7,242.6h0M1759.6,263h0M1759.3,303.6h0M1759.1,323.9h0M1759,344.2h0M1758.9,364.5h0M1758.6,405h0M1758.4,425.3h0M1758.3,445.5h0M1758.1,465.8h0M1757.9,506.2h0M1757.7,526.4h0M1757.6,546.6h0M1757.4,566.8h0M1757.2,607.1h0M1757,627.2h0M1756.9,647.3h0M1756.7,667.5h0M1756.5,707.7h0M1756.3,727.8h0M1756.2,747.8h0M1756.1,767.9h0M1755.8,808h0M1755.6,828h0M1755.5,848.1h0M1755.4,868.1h0M1755.1,908.1h0M1754.9,928h0M1754.8,948h0M1754.7,968h0M1754.4,1007.9h0M1754.2,1027.8h0M1754.1,1047.7h0M1754,1067.6h0M1883.5,99.6h0M1883.3,120h0M1883.1,140.4h0M1882.9,160.8h0M1882.6,201.6h0M1882.4,222h0M1882.2,242.4h0M1882.1,262.8h0M1881.7,303.4h0M1881.5,323.8h0M1881.4,344.1h0M1881.2,364.4h0M1880.8,405h0M1880.7,425.2h0M1880.5,445.5h0M1880.3,465.7h0M1880,506.2h0M1879.8,526.4h0M1879.6,546.6h0M1879.5,566.8h0M1879.1,607.2h0M1878.9,627.3h0M1878.8,647.5h0M1878.6,667.6h0M1878.2,707.8h0M1878.1,727.9h0M1877.9,748h0M1877.7,768.1h0M1877.4,808.3h0M1877.2,828.3h0M1877,848.3h0M1876.9,868.4h0M1876.5,908.4h0M1876.3,928.4h0M1876.2,948.4h0M1876,968.4h0M1875.7,1008.3h0M1875.5,1028.2h0M1875.3,1048.1h0M1875.1,1068.1h0" fill="none" stroke="#ecece0" stroke-width="3.3" stroke-linecap="round"/>
<path d="M140.7,581.5h3.4v9h-3.4zM164.5,581.6h3.4v9h-3.4zM188.4,581.6h3.4v9h-3.4zM212.2,581.6h3.4v9h-3.4zM236.1,581.6h3.4v9h-3.4zM260,581.6h3.4v9h-3.4zM283.9,581.6h3.4v9h-3.4zM307.7,581.6h3.4v9h-3.4zM331.6,581.6h3.4v9h-3.4zM355.5,581.7h3.4v9h-3.4zM379.4,581.7h3.4v9h-3.4zM403.4,581.7h3.4v9h-3.4zM427.3,581.7h3.4v9h-3.4zM451.2,581.7h3.4v9h-3.4zM475.2,581.7h3.4v9h-3.4zM499.1,581.7h3.4v9h-3.4zM523.1,581.7h3.4v9h-3.4zM547,581.8h3.4v9h-3.4zM571,581.8h3.4v9h-3.4zM595,581.8h3.4v9h-3.4zM619,581.8h3.4v9h-3.4zM643,581.8h3.4v9h-3.4zM667,581.8h3.4v9h-3.4zM691,581.8h3.4v9h-3.4zM715,581.9h3.4v9h-3.4zM739.1,581.9h3.4v9h-3.4zM763.1,581.9h3.4v9h-3.4zM787.2,581.9h3.4v9h-3.4zM811.2,581.9h3.4v9h-3.4zM835.3,581.9h3.4v9h-3.4zM859.3,581.9h3.4v9h-3.4zM883.4,581.9h3.4v9h-3.4zM907.5,582h3.4v9h-3.4zM931.6,582h3.4v9h-3.4zM955.7,582h3.4v9h-3.4zM979.8,582h3.4v9h-3.4zM1003.9,582h3.4v9h-3.4zM1052.2,582h3.4v9h-3.4zM1076.3,582h3.4v9h-3.4zM1100.5,582.1h3.4v9h-3.4zM1124.6,582.1h3.4v9h-3.4zM1148.8,582.1h3.4v9h-3.4zM1173,582.1h3.4v9h-3.4zM1197.2,582.1h3.4v9h-3.4zM1221.4,582.1h3.4v9h-3.4zM1245.6,582.1h3.4v9h-3.4zM1269.8,582.2h3.4v9h-3.4zM1294,582.2h3.4v9h-3.4zM1318.2,582.2h3.4v9h-3.4zM1342.4,582.2h3.4v9h-3.4zM1366.7,582.2h3.4v9h-3.4zM1390.9,582.2h3.4v9h-3.4zM1415.2,582.2h3.4v9h-3.4zM1439.4,582.2h3.4v9h-3.4zM1463.7,582.3h3.4v9h-3.4zM1488,582.3h3.4v9h-3.4zM1512.3,582.3h3.4v9h-3.4zM1536.6,582.3h3.4v9h-3.4zM1560.9,582.3h3.4v9h-3.4zM1585.2,582.3h3.4v9h-3.4zM1609.5,582.3h3.4v9h-3.4zM1633.8,582.3h3.4v9h-3.4zM1658.2,582.4h3.4v9h-3.4zM1682.5,582.4h3.4v9h-3.4zM1706.9,582.4h3.4v9h-3.4zM1731.2,582.4h3.4v9h-3.4zM1755.6,582.4h3.4v9h-3.4zM1780,582.4h3.4v9h-3.4zM1804.4,582.4h3.4v9h-3.4zM1828.8,582.5h3.4v9h-3.4zM1853.2,582.5h3.4v9h-3.4zM1877.6,582.5h3.4v9h-3.4zM1902,582.5h3.4v9h-3.4zM1926.4,582.5h3.4v9h-3.4zM1023.6,100.3h9.5v3.4h-9.5zM1023.7,120.6h9.5v3.4h-9.5zM1023.7,140.9h9.5v3.4h-9.5zM1023.8,161.2h9.5v3.4h-9.5zM1023.8,181.5h9.5v3.4h-9.5zM1023.9,201.7h9.5v3.4h-9.5zM1024,222h9.5v3.4h-9.5zM1024,242.2h9.5v3.4h-9.5zM1024.1,262.5h9.5v3.4h-9.5zM1024.1,282.7h9.5v3.4h-9.5zM1024.2,302.9h9.5v3.4h-9.5zM1024.3,323.1h9.5v3.4h-9.5zM1024.3,343.3h9.5v3.4h-9.5zM1024.4,363.5h9.5v3.4h-9.5zM1024.4,383.7h9.5v3.4h-9.5zM1024.5,403.9h9.5v3.4h-9.5zM1024.5,424h9.5v3.4h-9.5zM1024.6,444.1h9.5v3.4h-9.5zM1024.7,464.3h9.5v3.4h-9.5zM1024.7,484.4h9.5v3.4h-9.5zM1024.8,504.5h9.5v3.4h-9.5zM1024.8,524.6h9.5v3.4h-9.5zM1024.9,544.7h9.5v3.4h-9.5zM1024.9,564.8h9.5v3.4h-9.5zM1025,584.8h9.5v3.4h-9.5zM1025.1,604.9h9.5v3.4h-9.5zM1025.1,624.9h9.5v3.4h-9.5zM1025.2,644.9h9.5v3.4h-9.5zM1025.2,665h9.5v3.4h-9.5zM1025.3,685h9.5v3.4h-9.5zM1025.4,705h9.5v3.4h-9.5zM1025.4,725h9.5v3.4h-9.5zM1025.5,744.9h9.5v3.4h-9.5zM1025.5,764.9h9.5v3.4h-9.5zM1025.6,784.9h9.5v3.4h-9.5zM1025.6,804.8h9.5v3.4h-9.5zM1025.7,824.7h9.5v3.4h-9.5zM1025.8,844.7h9.5v3.4h-9.5zM1025.8,864.6h9.5v3.4h-9.5zM1025.9,884.5h9.5v3.4h-9.5zM1025.9,904.4h9.5v3.4h-9.5zM1026,924.3h9.5v3.4h-9.5zM1026,944.1h9.5v3.4h-9.5zM1026.1,964h9.5v3.4h-9.5zM1026.1,983.8h9.5v3.4h-9.5zM1026.2,1003.7h9.5v3.4h-9.5zM1026.3,1023.5h9.5v3.4h-9.5zM1026.3,1043.3h9.5v3.4h-9.5zM1026.4,1063.1h9.5v3.4h-9.5z" fill="#f6f6e0"/>
<line x1="440.4" y1="112" x2="448.8" y2="894" stroke="#4a30e8" stroke-width="2.2" stroke-dasharray="8.4 3.2 2 2.8"/>
<line x1="438.4" y1="112" x2="446.8" y2="894" stroke="#f434dc" stroke-width="4" stroke-dasharray="8.4 3.2 2 2.8"/>
<line x1="954.9" y1="88" x2="958.7" y2="1078" stroke="#4a30e8" stroke-width="2.2" stroke-dasharray="8.4 3.2 2 2.8"/>
<line x1="952.9" y1="88" x2="956.7" y2="1078" stroke="#f434dc" stroke-width="4" stroke-dasharray="8.4 3.2 2 2.8"/>
<path d="M124.5,708 126.9,708 126.9,709 129.3,709 129.3,708.8 131.7,708.8 131.7,711.2 134.1,711.2 134.1,709.8 136.5,709.8 136.5,712 138.9,712 138.9,713 141.3,713 141.3,711.8 143.7,711.8 143.7,714 146.1,714 146.1,713.8 148.5,713.8 148.5,714.8 150.9,714.8 150.9,716 153.3,716 153.3,718.2 155.7,718.2 155.7,716.8 158.1,716.8 158.1,718 160.5,718 160.5,719 162.9,719 162.9,720 165.3,720 165.3,721 167.7,721 167.7,721 170.1,721 170.1,722 172.5,722 172.5,723 174.9,723 174.9,724 177.3,724 177.3,724 179.7,724 179.7,725 182.1,725 182.1,726 184.5,726 184.5,727 186.9,727 186.9,725.8 189.3,725.8 189.3,728 191.7,728 191.7,729 194.1,729 194.1,727.8 196.5,727.8 196.5,730 198.9,730 198.9,731 201.3,731 201.3,732 203.7,732 203.7,732 206.1,732 206.1,733 208.5,733 208.5,735.2 210.9,735.2 210.9,735 213.3,735 213.3,735 215.7,735 215.7,736 218.1,736 218.1,738.2 220.5,738.2 220.5,738 222.9,738 222.9,738 225.3,738 225.3,739 227.7,739 227.7,740 230.1,740 230.1,741 232.5,741 232.5,741 234.9,741 234.9,742 237.3,742 237.3,741.8 239.7,741.8 239.7,744 242.1,744 242.1,745.2 244.5,745.2 244.5,745 246.9,745 246.9,746 249.3,746 249.3,747 251.7,747 251.7,748.2 254.1,748.2 254.1,748 256.5,748 256.5,750.2 258.9,750.2 258.9,750 261.3,750 261.3,750 263.7,750 263.7,751 266.1,751 266.1,753.2 268.5,753.2 268.5,751.8 270.9,751.8 270.9,751.8 273.3,751.8 273.3,754 275.7,754 275.7,755 278.1,755 278.1,754.8 280.5,754.8 280.5,756 282.9,756 282.9,757 285.3,757 285.3,758 287.7,758 287.7,759 290.1,759 290.1,759 292.5,759 292.5,760 294.9,760 294.9,759.8 297.3,759.8 297.3,762 299.7,762 299.7,762 302.1,762 302.1,763 304.5,763 304.5,764 306.9,764 306.9,765 309.3,765 309.3,765 311.7,765 311.7,766 314.1,766 314.1,768.2 316.5,768.2 316.5,766.8 318.9,766.8 318.9,768 321.3,768 321.3,769 323.7,769 323.7,770 326.1,770 326.1,771 328.5,771 328.5,771 330.9,771 330.9,772 333.3,772 333.3,773 335.7,773 335.7,774 338.1,774 338.1,775 340.5,775 340.5,775 342.9,775 342.9,776 345.3,776 345.3,777 347.7,777 347.7,778 350.1,778 350.1,778 352.5,778 352.5,779 354.9,779 354.9,778.8 357.3,778.8 357.3,781 359.7,781 359.7,781 362.1,781 362.1,782 364.5,782 364.5,783 366.9,783 366.9,785.2 369.3,785.2 369.3,785 371.7,785 371.7,785 374.1,785 374.1,784.8 376.5,784.8 376.5,788.2 378.9,788.2 378.9,789.2 381.3,789.2 381.3,789.2 383.7,789.2 383.7,789 386.1,789 386.1,790 388.5,790 388.5,789.8 390.9,789.8 390.9,791 393.3,791 393.3,790.8 395.7,790.8 395.7,791.8 398.1,791.8 398.1,794 400.5,794 400.5,793.8 402.9,793.8 402.9,795 405.3,795 405.3,794.8 407.7,794.8 407.7,797 410.1,797 410.1,798 412.5,798 412.5,798 414.9,798 414.9,797.8 417.3,797.8 417.3,801.2 419.7,801.2 419.7,801 422.1,801 422.1,802 424.5,802 424.5,802 426.9,802 426.9,803 429.3,803 429.3,804 431.7,804 431.7,803.8 434.1,803.8 434.1,805 436.5,805 436.5,806 438.9,806 438.9,807 441.3,807 441.3,818.8 438.9,818.8 438.9,819 436.5,819 436.5,818 434.1,818 434.1,819.2 431.7,819.2 431.7,815.8 429.3,815.8 429.3,816 426.9,816 426.9,815 424.5,815 424.5,814 422.1,814 422.1,814 419.7,814 419.7,813 417.3,813 417.3,810.8 414.9,810.8 414.9,811 412.5,811 412.5,809.8 410.1,809.8 410.1,810 407.7,810 407.7,807.8 405.3,807.8 405.3,806.8 402.9,806.8 402.9,807 400.5,807 400.5,807 398.1,807 398.1,806 395.7,806 395.7,805 393.3,805 393.3,804 390.9,804 390.9,804 388.5,804 388.5,803 386.1,803 386.1,802 383.7,802 383.7,801 381.3,801 381.3,800 378.9,800 378.9,801.2 376.5,801.2 376.5,799 374.1,799 374.1,798 371.7,798 371.7,797 369.3,797 369.3,797 366.9,797 366.9,796 364.5,796 364.5,795 362.1,795 362.1,794 359.7,794 359.7,793 357.3,793 357.3,793 354.9,793 354.9,792 352.5,792 352.5,791 350.1,791 350.1,791.2 347.7,791.2 347.7,788.8 345.3,788.8 345.3,789 342.9,789 342.9,788 340.5,788 340.5,785.8 338.1,785.8 338.1,787 335.7,787 335.7,786 333.3,786 333.3,785 330.9,785 330.9,784 328.5,784 328.5,785.2 326.1,785.2 326.1,784.2 323.7,784.2 323.7,782 321.3,782 321.3,781 318.9,781 318.9,780 316.5,780 316.5,780 314.1,780 314.1,779 311.7,779 311.7,778 309.3,778 309.3,777 306.9,777 306.9,778.2 304.5,778.2 304.5,774.8 302.1,774.8 302.1,773.8 299.7,773.8 299.7,774 297.3,774 297.3,774 294.9,774 294.9,773 292.5,773 292.5,772 290.1,772 290.1,771 287.7,771 287.7,772.2 285.3,772.2 285.3,770 282.9,770 282.9,769 280.5,769 280.5,768 278.1,768 278.1,766.8 275.7,766.8 275.7,767 273.3,767 273.3,766 270.9,766 270.9,766.2 268.5,766.2 268.5,765 266.1,765 266.1,764 263.7,764 263.7,763 261.3,763 261.3,762 258.9,762 258.9,762 256.5,762 256.5,762.2 254.1,762.2 254.1,760 251.7,760 251.7,757.8 249.3,757.8 249.3,757.8 246.9,757.8 246.9,758 244.5,758 244.5,757 242.1,757 242.1,756 239.7,756 239.7,756 237.3,756 237.3,753.8 234.9,753.8 234.9,754 232.5,754 232.5,753 230.1,753 230.1,753 227.7,753 227.7,752 225.3,752 225.3,749.8 222.9,749.8 222.9,751.2 220.5,751.2 220.5,750 218.1,750 218.1,749 215.7,749 215.7,748 213.3,748 213.3,747 210.9,747 210.9,747 208.5,747 208.5,746 206.1,746 206.1,745 203.7,745 203.7,744 201.3,744 201.3,742.8 198.9,742.8 198.9,741.8 196.5,741.8 196.5,742 194.1,742 194.1,741 191.7,741 191.7,741 189.3,741 189.3,740 186.9,740 186.9,739 184.5,739 184.5,740.2 182.1,740.2 182.1,738 179.7,738 179.7,735.8 177.3,735.8 177.3,736 174.9,736 174.9,736 172.5,736 172.5,736.2 170.1,736.2 170.1,732.8 167.7,732.8 167.7,731.8 165.3,731.8 165.3,733 162.9,733 162.9,730.8 160.5,730.8 160.5,731 158.1,731 158.1,730 155.7,730 155.7,730 153.3,730 153.3,727.8 150.9,727.8 150.9,728 148.5,728 148.5,728 146.1,728 146.1,727 143.7,727 143.7,724.8 141.3,724.8 141.3,725 138.9,725 138.9,723.8 136.5,723.8 136.5,724 134.1,724 134.1,723 131.7,723 131.7,720.8 129.3,720.8 129.3,722 126.9,722 126.9,721 124.5,721Z M439,262 441.4,262 441.4,262 443.8,262 443.8,263 446.2,263 446.2,263 448.6,263 448.6,263 451,263 451,263 453.4,263 453.4,264 455.8,264 455.8,266 458.2,266 458.2,268 460.6,268 460.6,267.8 463,267.8 463,271 465.4,271 465.4,272 467.8,272 467.8,271.8 470.2,271.8 470.2,275.2 472.6,275.2 472.6,275 475,275 475,277 477.4,277 477.4,279.2 479.8,279.2 479.8,280 482.2,280 482.2,282.2 484.6,282.2 484.6,283 487,283 487,284 489.4,284 489.4,287.2 491.8,287.2 491.8,288.2 494.2,288.2 494.2,289 496.6,289 496.6,291 499,291 499,292 501.4,292 501.4,295.2 503.8,295.2 503.8,295 506.2,295 506.2,297 508.6,297 508.6,299 511,299 511,298.8 513.4,298.8 513.4,302 515.8,302 515.8,304 518.2,304 518.2,306 520.6,306 520.6,307 523,307 523,310.2 525.4,310.2 525.4,311 527.8,311 527.8,310.8 530.2,310.8 530.2,312.8 532.6,312.8 532.6,316 535,316 535,318 537.4,318 537.4,319 539.8,319 539.8,321 542.2,321 542.2,321.8 544.6,321.8 544.6,324 547,324 547,327.2 549.4,327.2 549.4,326.8 551.8,326.8 551.8,329 554.2,329 554.2,331 556.6,331 556.6,333 559,333 559,334 561.4,334 561.4,336 563.8,336 563.8,339.2 566.2,339.2 566.2,339 568.6,339 568.6,342.2 571,342.2 571,343 573.4,343 573.4,344 575.8,344 575.8,344.8 578.2,344.8 578.2,348 580.6,348 580.6,349 583,349 583,351 585.4,351 585.4,352 587.8,352 587.8,354 590.2,354 590.2,356 592.6,356 592.6,357 595,357 595,359 597.4,359 597.4,361 599.8,361 599.8,362 602.2,362 602.2,362.8 604.6,362.8 604.6,366.2 607,366.2 607,367 609.4,367 609.4,369 611.8,369 611.8,370 614.2,370 614.2,373.2 616.6,373.2 616.6,374.2 619,374.2 619,375 621.4,375 621.4,376 623.8,376 623.8,378 626.2,378 626.2,380 628.6,380 628.6,381 631,381 631,383 633.4,383 633.4,384 635.8,384 635.8,386 638.2,386 638.2,387 640.6,387 640.6,389 643,389 643,390 645.4,390 645.4,392 647.8,392 647.8,395.2 650.2,395.2 650.2,395 652.6,395 652.6,397 655,397 655,398 657.4,398 657.4,401.2 659.8,401.2 659.8,402.2 662.2,402.2 662.2,403 664.6,403 664.6,405.2 667,405.2 667,406 669.4,406 669.4,407 671.8,407 671.8,409 674.2,409 674.2,408.8 676.6,408.8 676.6,410.8 679,410.8 679,413 681.4,413 681.4,415 683.8,415 683.8,416 686.2,416 686.2,419.2 688.6,419.2 688.6,419 691,419 691,421 693.4,421 693.4,422 695.8,422 695.8,425.2 698.2,425.2 698.2,425 700.6,425 700.6,427 703,427 703,429.2 705.4,429.2 705.4,430 707.8,430 707.8,431 710.2,431 710.2,432 712.6,432 712.6,434 715,434 715,435 717.4,435 717.4,437 719.8,437 719.8,439.2 722.2,439.2 722.2,440 724.6,440 724.6,441 727,441 727,443 729.4,443 729.4,444 731.8,444 731.8,445 734.2,445 734.2,447 736.6,447 736.6,448 739,448 739,450 741.4,450 741.4,451 743.8,451 743.8,453 746.2,453 746.2,454 748.6,454 748.6,455 751,455 751,455.8 753.4,455.8 753.4,458 755.8,458 755.8,460 758.2,460 758.2,461 760.6,461 760.6,462 763,462 763,464 765.4,464 765.4,465 767.8,465 767.8,467 770.2,467 770.2,468 772.6,468 772.6,470.2 775,470.2 775,471 777.4,471 777.4,472 779.8,472 779.8,473 782.2,473 782.2,475 784.6,475 784.6,476 787,476 787,476.8 789.4,476.8 789.4,479 791.8,479 791.8,480 794.2,480 794.2,482 796.6,482 796.6,483 799,483 799,484 801.4,484 801.4,486 803.8,486 803.8,487 806.2,487 806.2,486.8 808.6,486.8 808.6,491.2 811,491.2 811,489.8 813.4,489.8 813.4,492 815.8,492 815.8,492.8 818.2,492.8 818.2,495 820.6,495 820.6,497.2 823,497.2 823,499.2 825.4,499.2 825.4,500.2 827.8,500.2 827.8,501.2 830.2,501.2 830.2,502 832.6,502 832.6,503 835,503 835,504 837.4,504 837.4,506 839.8,506 839.8,505.8 842.2,505.8 842.2,506.8 844.6,506.8 844.6,509 847,509 847,511 849.4,511 849.4,512 851.8,512 851.8,513 854.2,513 854.2,516.2 856.6,516.2 856.6,514.8 859,514.8 859,518.2 861.4,518.2 861.4,516.8 863.8,516.8 863.8,521.2 866.2,521.2 866.2,521 868.6,521 868.6,522 871,522 871,524 873.4,524 873.4,525 875.8,525 875.8,524.8 878.2,524.8 878.2,527 880.6,527 880.6,527.8 883,527.8 883,530 885.4,530 885.4,531 887.8,531 887.8,532 890.2,532 890.2,534 892.6,534 892.6,536.2 895,536.2 895,536 897.4,536 897.4,537 899.8,537 899.8,539 902.2,539 902.2,540 904.6,540 904.6,539.8 907,539.8 907,540.8 909.4,540.8 909.4,541.8 911.8,541.8 911.8,545 914.2,545 914.2,546 916.6,546 916.6,547 919,547 919,548 921.4,548 921.4,550 923.8,550 923.8,551 926.2,551 926.2,552 928.6,552 928.6,553 931,553 931,554 933.4,554 933.4,556 935.8,556 935.8,557 938.2,557 938.2,558 940.6,558 940.6,560.2 943,560.2 943,560 945.4,560 945.4,562 947.8,562 947.8,563 950.2,563 950.2,565.2 952.6,565.2 952.6,563.8 955,563.8 955,566 957.4,566 957.4,567 959.8,567 959.8,569 962.2,569 962.2,568.8 964.6,568.8 964.6,572.2 967,572.2 967,573.2 969.4,573.2 969.4,573 971.8,573 971.8,574 974.2,574 974.2,576 976.6,576 976.6,575.8 979,575.8 979,578 981.4,578 981.4,579 983.8,579 983.8,578.8 986.2,578.8 986.2,581 988.6,581 988.6,583 991,583 991,583 993.4,583 993.4,582 995.8,582 995.8,582 998.2,582 998.2,581.8 1000.6,581.8 1000.6,583 1003,583 1003,584 1005.4,584 1005.4,585 1007.8,585 1007.8,586 1010.2,586 1010.2,587 1012.6,587 1012.6,586.8 1015,586.8 1015,590 1017.4,590 1017.4,589.8 1019.8,589.8 1019.8,592 1022.2,592 1022.2,591.8 1024.6,591.8 1024.6,592.8 1027,592.8 1027,595 1029.4,595 1029.4,596 1031.8,596 1031.8,597 1034.2,597 1034.2,599.2 1036.6,599.2 1036.6,600 1039,600 1039,601 1041.4,601 1041.4,602 1043.8,602 1043.8,604.2 1046.2,604.2 1046.2,604 1048.6,604 1048.6,605 1051,605 1051,606 1053.4,606 1053.4,607 1055.8,607 1055.8,606.8 1058.2,606.8 1058.2,610.2 1060.6,610.2 1060.6,610 1063,610 1063,611 1065.4,611 1065.4,612 1067.8,612 1067.8,614 1070.2,614 1070.2,615 1072.6,615 1072.6,616 1075,616 1075,618.2 1077.4,618.2 1077.4,619.2 1079.8,619.2 1079.8,620.2 1082.2,620.2 1082.2,620 1084.6,620 1084.6,621 1087,621 1087,622 1089.4,622 1089.4,623 1091.8,623 1091.8,622.8 1094.2,622.8 1094.2,625 1096.6,625 1096.6,626 1099,626 1099,627 1101.4,627 1101.4,628 1103.8,628 1103.8,627.8 1106.2,627.8 1106.2,628.8 1108.6,628.8 1108.6,631 1111,631 1111,632 1113.4,632 1113.4,633 1115.8,633 1115.8,634 1118.2,634 1118.2,633.8 1120.6,633.8 1120.6,636 1123,636 1123,635.8 1125.4,635.8 1125.4,638 1127.8,638 1127.8,639 1130.2,639 1130.2,640 1132.6,640 1132.6,642.2 1135,642.2 1135,643.2 1137.4,643.2 1137.4,643 1139.8,643 1139.8,645.2 1142.2,645.2 1142.2,645 1144.6,645 1144.6,646 1147,646 1147,647 1149.4,647 1149.4,648 1151.8,648 1151.8,649 1154.2,649 1154.2,650 1156.6,650 1156.6,649.8 1159,649.8 1159,652 1161.4,652 1161.4,653 1163.8,653 1163.8,654 1166.2,654 1166.2,655 1168.6,655 1168.6,656 1171,656 1171,657 1173.4,657 1173.4,658 1175.8,658 1175.8,659 1178.2,659 1178.2,660 1180.6,660 1180.6,661 1183,661 1183,662 1185.4,662 1185.4,663 1187.8,663 1187.8,664 1190.2,664 1190.2,665 1192.6,665 1192.6,666 1195,666 1195,667 1197.4,667 1197.4,668 1199.8,668 1199.8,667.8 1202.2,667.8 1202.2,670 1204.6,670 1204.6,669.8 1207,669.8 1207,670.8 1209.4,670.8 1209.4,673 1211.8,673 1211.8,674.2 1214.2,674.2 1214.2,674 1216.6,674 1216.6,675 1219,675 1219,676 1221.4,676 1221.4,677 1223.8,677 1223.8,678 1226.2,678 1226.2,679 1228.6,679 1228.6,680 1231,680 1231,681 1233.4,681 1233.4,682 1235.8,682 1235.8,683 1238.2,683 1238.2,684 1240.6,684 1240.6,685 1243,685 1243,685 1245.4,685 1245.4,684.8 1247.8,684.8 1247.8,685.8 1250.2,685.8 1250.2,688 1252.6,688 1252.6,689 1255,689 1255,690 1257.4,690 1257.4,691 1259.8,691 1259.8,692 1262.2,692 1262.2,691.8 1264.6,691.8 1264.6,694 1267,694 1267,695 1269.4,695 1269.4,695 1271.8,695 1271.8,696 1274.2,696 1274.2,697 1276.6,697 1276.6,696.8 1279,696.8 1279,699 1281.4,699 1281.4,700 1283.8,700 1283.8,701 1286.2,701 1286.2,703.2 1288.6,703.2 1288.6,700.8 1291,700.8 1291,703 1293.4,703 1293.4,704 1295.8,704 1295.8,703.8 1298.2,703.8 1298.2,704.8 1300.6,704.8 1300.6,708.2 1303,708.2 1303,708 1305.4,708 1305.4,709 1307.8,709 1307.8,709 1310.2,709 1310.2,710 1312.6,710 1312.6,711 1315,711 1315,712 1317.4,712 1317.4,713 1319.8,713 1319.8,715.2 1322.2,715.2 1322.2,715 1324.6,715 1324.6,715 1327,715 1327,716 1329.4,716 1329.4,715.8 1331.8,715.8 1331.8,718 1334.2,718 1334.2,719 1336.6,719 1336.6,721.2 1339,721.2 1339,720 1341.4,720 1341.4,721 1343.8,721 1343.8,720.8 1346.2,720.8 1346.2,723 1348.6,723 1348.6,724 1351,724 1351,725 1353.4,725 1353.4,725 1355.8,725 1355.8,726 1358.2,726 1358.2,727 1360.6,727 1360.6,728 1363,728 1363,729 1365.4,729 1365.4,730 1367.8,730 1367.8,730 1370.2,730 1370.2,729.8 1372.6,729.8 1372.6,732 1375,732 1375,731.8 1377.4,731.8 1377.4,734 1379.8,734 1379.8,734 1382.2,734 1382.2,735 1384.6,735 1384.6,736 1387,736 1387,737 1389.4,737 1389.4,738 1391.8,738 1391.8,738 1394.2,738 1394.2,737.8 1396.6,737.8 1396.6,740 1399,740 1399,739.8 1401.4,739.8 1401.4,742 1403.8,742 1403.8,742 1406.2,742 1406.2,743 1408.6,743 1408.6,742.8 1411,742.8 1411,746.2 1413.4,746.2 1413.4,746 1415.8,746 1415.8,746 1418.2,746 1418.2,747 1420.6,747 1420.6,748 1423,748 1423,750.2 1425.4,750.2 1425.4,750 1427.8,750 1427.8,750 1430.2,750 1430.2,751 1432.6,751 1432.6,752 1435,752 1435,753 1437.4,753 1437.4,754.2 1439.8,754.2 1439.8,754 1442.2,754 1442.2,755 1444.6,755 1444.6,756 1447,756 1447,757 1449.4,757 1449.4,757 1451.8,757 1451.8,759.2 1454.2,759.2 1454.2,760.2 1456.6,760.2 1456.6,760 1459,760 1459,760 1461.4,760 1461.4,762.2 1463.8,762.2 1463.8,762 1466.2,762 1466.2,763 1468.6,763 1468.6,761.8 1471,761.8 1471,765.2 1473.4,765.2 1473.4,766.2 1475.8,766.2 1475.8,766 1478.2,766 1478.2,767.2 1480.6,767.2 1480.6,767 1483,767 1483,768 1485.4,768 1485.4,769 1487.8,769 1487.8,770.2 1490.2,770.2 1490.2,770 1492.6,770 1492.6,772.2 1495,772.2 1495,772 1497.4,772 1497.4,772 1499.8,772 1499.8,771.8 1502.2,771.8 1502.2,775.2 1504.6,775.2 1504.6,775 1507,775 1507,773.8 1509.4,773.8 1509.4,776 1511.8,776 1511.8,777 1514.2,777 1514.2,777 1516.6,777 1516.6,778 1519,778 1519,779 1521.4,779 1521.4,778.8 1523.8,778.8 1523.8,778.8 1526.2,778.8 1526.2,781 1528.6,781 1528.6,782 1531,782 1531,782 1533.4,782 1533.4,784.2 1535.8,784.2 1535.8,782.8 1538.2,782.8 1538.2,785 1540.6,785 1540.6,785 1543,785 1543,786 1545.4,786 1545.4,788.2 1547.8,788.2 1547.8,787 1550.2,787 1550.2,788 1552.6,788 1552.6,789 1555,789 1555,790 1557.4,790 1557.4,790 1559.8,790 1559.8,789.8 1562.2,789.8 1562.2,792 1564.6,792 1564.6,792 1567,792 1567,793 1569.4,793 1569.4,794 1571.8,794 1571.8,794 1574.2,794 1574.2,795 1576.6,795 1576.6,796 1579,796 1579,797 1581.4,797 1581.4,797 1583.8,797 1583.8,798 1586.2,798 1586.2,799 1588.6,799 1588.6,797.8 1591,797.8 1591,800 1593.4,800 1593.4,802.2 1595.8,802.2 1595.8,799.8 1598.2,799.8 1598.2,802 1600.6,802 1600.6,803 1603,803 1603,804.2 1605.4,804.2 1605.4,804 1607.8,804 1607.8,805 1610.2,805 1610.2,806.2 1612.6,806.2 1612.6,804.8 1615,804.8 1615,807 1617.4,807 1617.4,807 1619.8,807 1619.8,808 1622.2,808 1622.2,809 1624.6,809 1624.6,809 1627,809 1627,810 1629.4,810 1629.4,811 1631.8,811 1631.8,811 1634.2,811 1634.2,824 1631.8,824 1631.8,821.8 1629.4,821.8 1629.4,821.8 1627,821.8 1627,822 1624.6,822 1624.6,819.8 1622.2,819.8 1622.2,821 1619.8,821 1619.8,820 1617.4,820 1617.4,819 1615,819 1615,819 1612.6,819 1612.6,818 1610.2,818 1610.2,817 1607.8,817 1607.8,817 1605.4,817 1605.4,816 1603,816 1603,816.2 1600.6,816.2 1600.6,815 1598.2,815 1598.2,814 1595.8,814 1595.8,813 1593.4,813 1593.4,813 1591,813 1591,813.2 1588.6,813.2 1588.6,811 1586.2,811 1586.2,811 1583.8,811 1583.8,810 1581.4,810 1581.4,809 1579,809 1579,807.8 1576.6,807.8 1576.6,808 1574.2,808 1574.2,807 1571.8,807 1571.8,806 1569.4,806 1569.4,804.8 1567,804.8 1567,805 1564.6,805 1564.6,804 1562.2,804 1562.2,802.8 1559.8,802.8 1559.8,803 1557.4,803 1557.4,802 1555,802 1555,800.8 1552.6,800.8 1552.6,801 1550.2,801 1550.2,800 1547.8,800 1547.8,799 1545.4,799 1545.4,799 1543,799 1543,798 1540.6,798 1540.6,797 1538.2,797 1538.2,795.8 1535.8,795.8 1535.8,796 1533.4,796 1533.4,795 1531,795 1531,794 1528.6,794 1528.6,794 1526.2,794 1526.2,793 1523.8,793 1523.8,790.8 1521.4,790.8 1521.4,793.2 1519,793.2 1519,791 1516.6,791 1516.6,790 1514.2,790 1514.2,789 1511.8,789 1511.8,789 1509.4,789 1509.4,788 1507,788 1507,787 1504.6,787 1504.6,787 1502.2,787 1502.2,784.8 1499.8,784.8 1499.8,786.2 1497.4,786.2 1497.4,782.8 1495,782.8 1495,785.2 1492.6,785.2 1492.6,783 1490.2,783 1490.2,782 1487.8,782 1487.8,779.8 1485.4,779.8 1485.4,781 1483,781 1483,780 1480.6,780 1480.6,777.8 1478.2,777.8 1478.2,778 1475.8,778 1475.8,778 1473.4,778 1473.4,777 1471,777 1471,776 1468.6,776 1468.6,773.8 1466.2,773.8 1466.2,775 1463.8,775 1463.8,775.2 1461.4,775.2 1461.4,773 1459,773 1459,770.8 1456.6,770.8 1456.6,770.8 1454.2,770.8 1454.2,772.2 1451.8,772.2 1451.8,770 1449.4,770 1449.4,769 1447,769 1447,769 1444.6,769 1444.6,768 1442.2,768 1442.2,765.8 1439.8,765.8 1439.8,767.2 1437.4,767.2 1437.4,766.2 1435,766.2 1435,765 1432.6,765 1432.6,764 1430.2,764 1430.2,763 1427.8,763 1427.8,762 1425.4,762 1425.4,760.8 1423,760.8 1423,761 1420.6,761 1420.6,760 1418.2,760 1418.2,759 1415.8,759 1415.8,758 1413.4,758 1413.4,758 1411,758 1411,757 1408.6,757 1408.6,756 1406.2,756 1406.2,756.2 1403.8,756.2 1403.8,755 1401.4,755 1401.4,754 1399,754 1399,753 1396.6,753 1396.6,752 1394.2,752 1394.2,751 1391.8,751 1391.8,751 1389.4,751 1389.4,750 1387,750 1387,750.2 1384.6,750.2 1384.6,748 1382.2,748 1382.2,747 1379.8,747 1379.8,748.2 1377.4,748.2 1377.4,746 1375,746 1375,745 1372.6,745 1372.6,744 1370.2,744 1370.2,743 1367.8,743 1367.8,742 1365.4,742 1365.4,742 1363,742 1363,741 1360.6,741 1360.6,740 1358.2,740 1358.2,739 1355.8,739 1355.8,738 1353.4,738 1353.4,738 1351,738 1351,737 1348.6,737 1348.6,736 1346.2,736 1346.2,735 1343.8,735 1343.8,734 1341.4,734 1341.4,734.2 1339,734.2 1339,733 1336.6,733 1336.6,732 1334.2,732 1334.2,731 1331.8,731 1331.8,728.8 1329.4,728.8 1329.4,729 1327,729 1327,728 1324.6,728 1324.6,727 1322.2,727 1322.2,728.2 1319.8,728.2 1319.8,724.8 1317.4,724.8 1317.4,726.2 1315,726.2 1315,725.2 1312.6,725.2 1312.6,723 1310.2,723 1310.2,722 1307.8,722 1307.8,722 1305.4,722 1305.4,721 1303,721 1303,720 1300.6,720 1300.6,717.8 1298.2,717.8 1298.2,718 1295.8,718 1295.8,718.2 1293.4,718.2 1293.4,717.2 1291,717.2 1291,715 1288.6,715 1288.6,715 1286.2,715 1286.2,714 1283.8,714 1283.8,711.8 1281.4,711.8 1281.4,712 1279,712 1279,711 1276.6,711 1276.6,710 1274.2,710 1274.2,707.8 1271.8,707.8 1271.8,709.2 1269.4,709.2 1269.4,709.2 1267,709.2 1267,705.8 1264.6,705.8 1264.6,707.2 1262.2,707.2 1262.2,705 1259.8,705 1259.8,704 1257.4,704 1257.4,703 1255,703 1255,702 1252.6,702 1252.6,701 1250.2,701 1250.2,700 1247.8,700 1247.8,699 1245.4,699 1245.4,699 1243,699 1243,698 1240.6,698 1240.6,697 1238.2,697 1238.2,694.8 1235.8,694.8 1235.8,695 1233.4,695 1233.4,695.2 1231,695.2 1231,693 1228.6,693 1228.6,692 1226.2,692 1226.2,691 1223.8,691 1223.8,688.8 1221.4,688.8 1221.4,687.8 1219,687.8 1219,688 1216.6,688 1216.6,687 1214.2,687 1214.2,687 1211.8,687 1211.8,684.8 1209.4,684.8 1209.4,685 1207,685 1207,684 1204.6,684 1204.6,683 1202.2,683 1202.2,682 1199.8,682 1199.8,682.2 1197.4,682.2 1197.4,680 1195,680 1195,679 1192.6,679 1192.6,678 1190.2,678 1190.2,677 1187.8,677 1187.8,676 1185.4,676 1185.4,673.8 1183,673.8 1183,674 1180.6,674 1180.6,671.8 1178.2,671.8 1178.2,670.8 1175.8,670.8 1175.8,671 1173.4,671 1173.4,670 1171,670 1171,669 1168.6,669 1168.6,668 1166.2,668 1166.2,668 1163.8,668 1163.8,665.8 1161.4,665.8 1161.4,666 1159,666 1159,665 1156.6,665 1156.6,665.2 1154.2,665.2 1154.2,663 1151.8,663 1151.8,660.8 1149.4,660.8 1149.4,662.2 1147,662.2 1147,660 1144.6,660 1144.6,659 1142.2,659 1142.2,658 1139.8,658 1139.8,657 1137.4,657 1137.4,656 1135,656 1135,653.8 1132.6,653.8 1132.6,654 1130.2,654 1130.2,653 1127.8,653 1127.8,650.8 1125.4,650.8 1125.4,651 1123,651 1123,650 1120.6,650 1120.6,649 1118.2,649 1118.2,649.2 1115.8,649.2 1115.8,645.8 1113.4,645.8 1113.4,646 1111,646 1111,645 1108.6,645 1108.6,644 1106.2,644 1106.2,643 1103.8,643 1103.8,641 1101.4,641 1101.4,641.2 1099,641.2 1099,637.8 1096.6,637.8 1096.6,638 1094.2,638 1094.2,635.8 1091.8,635.8 1091.8,634.8 1089.4,634.8 1089.4,635 1087,635 1087,634 1084.6,634 1084.6,634.2 1082.2,634.2 1082.2,632 1079.8,632 1079.8,629.8 1077.4,629.8 1077.4,631.2 1075,631.2 1075,629 1072.6,629 1072.6,629.2 1070.2,629.2 1070.2,627 1067.8,627 1067.8,627.2 1065.4,627.2 1065.4,625 1063,625 1063,624 1060.6,624 1060.6,623 1058.2,623 1058.2,623.2 1055.8,623.2 1055.8,620 1053.4,620 1053.4,619 1051,619 1051,618 1048.6,618 1048.6,617 1046.2,617 1046.2,616 1043.8,616 1043.8,615 1041.4,615 1041.4,615.2 1039,615.2 1039,613 1036.6,613 1036.6,613.2 1034.2,613.2 1034.2,611 1031.8,611 1031.8,608.8 1029.4,608.8 1029.4,609 1027,609 1027,607 1024.6,607 1024.6,606 1022.2,606 1022.2,605 1019.8,605 1019.8,604 1017.4,604 1017.4,604.2 1015,604.2 1015,600.8 1012.6,600.8 1012.6,602.2 1010.2,602.2 1010.2,600 1007.8,600 1007.8,599 1005.4,599 1005.4,597 1003,597 1003,594.8 1000.6,594.8 1000.6,595 998.2,595 998.2,594 995.8,594 995.8,595 993.4,595 993.4,593.8 991,593.8 991,595 988.6,595 988.6,594 986.2,594 986.2,594 983.8,594 983.8,593 981.4,593 981.4,591 979,591 979,590 976.6,590 976.6,589 974.2,589 974.2,588 971.8,588 971.8,587 969.4,587 969.4,586 967,586 967,585 964.6,585 964.6,583 962.2,583 962.2,580.8 959.8,580.8 959.8,581 957.4,581 957.4,580 955,580 955,577.8 952.6,577.8 952.6,578 950.2,578 950.2,574.8 947.8,574.8 947.8,575 945.4,575 945.4,574 943,574 943,573 940.6,573 940.6,572 938.2,572 938.2,570 935.8,570 935.8,569 933.4,569 933.4,568 931,568 931,568.2 928.6,568.2 928.6,566 926.2,566 926.2,564 923.8,564 923.8,564.2 921.4,564.2 921.4,560.8 919,560.8 919,561 916.6,561 916.6,560 914.2,560 914.2,558 911.8,558 911.8,557 909.4,557 909.4,554.8 907,554.8 907,555 904.6,555 904.6,555.2 902.2,555.2 902.2,552 899.8,552 899.8,551 897.4,551 897.4,550 895,550 895,549 892.6,549 892.6,547 890.2,547 890.2,546 887.8,546 887.8,545 885.4,545 885.4,542.8 883,542.8 883,542 880.6,542 880.6,541 878.2,541 878.2,540 875.8,540 875.8,539 873.4,539 873.4,537 871,537 871,536 868.6,536 868.6,533.8 866.2,533.8 866.2,532.8 863.8,532.8 863.8,532 861.4,532 861.4,531 859,531 859,530 856.6,530 856.6,528 854.2,528 854.2,525.8 851.8,525.8 851.8,524.8 849.4,524.8 849.4,523.8 847,523.8 847,523 844.6,523 844.6,523.2 842.2,523.2 842.2,521 839.8,521 839.8,519 837.4,519 837.4,518 835,518 835,517 832.6,517 832.6,516 830.2,516 830.2,514 827.8,514 827.8,513 825.4,513 825.4,512 823,512 823,510 820.6,510 820.6,509 818.2,509 818.2,509.2 815.8,509.2 815.8,506 813.4,506 813.4,503.8 811,503.8 811,504 808.6,504 808.6,500.8 806.2,500.8 806.2,501 803.8,501 803.8,500 801.4,500 801.4,498 799,498 799,495.8 796.6,495.8 796.6,496 794.2,496 794.2,494 791.8,494 791.8,491.8 789.4,491.8 789.4,492 787,492 787,490 784.6,490 784.6,489 782.2,489 782.2,487 779.8,487 779.8,486 777.4,486 777.4,485 775,485 775,483 772.6,483 772.6,482 770.2,482 770.2,481 767.8,481 767.8,477.8 765.4,477.8 765.4,478 763,478 763,476 760.6,476 760.6,475 758.2,475 758.2,474 755.8,474 755.8,472 753.4,472 753.4,472.2 751,472.2 751,470.2 748.6,470.2 748.6,468 746.2,468 746.2,465.8 743.8,465.8 743.8,465 741.4,465 741.4,462.8 739,462.8 739,462 736.6,462 736.6,459.8 734.2,459.8 734.2,460 731.8,460 731.8,459.2 729.4,459.2 729.4,457 727,457 727,455 724.6,455 724.6,454 722.2,454 722.2,452 719.8,452 719.8,451 717.4,451 717.4,450 715,450 715,448 712.6,448 712.6,447 710.2,447 710.2,445 707.8,445 707.8,444 705.4,444 705.4,440.8 703,440.8 703,439.8 700.6,439.8 700.6,439 698.2,439 698.2,436.8 695.8,436.8 695.8,434.8 693.4,434.8 693.4,435 691,435 691,432.8 688.6,432.8 688.6,430.8 686.2,430.8 686.2,432.2 683.8,432.2 683.8,429 681.4,429 681.4,428 679,428 679,426 676.6,426 676.6,425 674.2,425 674.2,423 671.8,423 671.8,422 669.4,422 669.4,420 667,420 667,420.2 664.6,420.2 664.6,415.8 662.2,415.8 662.2,416 659.8,416 659.8,414 657.4,414 657.4,411.8 655,411.8 655,411 652.6,411 652.6,410 650.2,410 650.2,408 647.8,408 647.8,406 645.4,406 645.4,406.2 643,406.2 643,403 640.6,403 640.6,402 638.2,402 638.2,398.8 635.8,398.8 635.8,400.2 633.4,400.2 633.4,397 631,397 631,396 628.6,396 628.6,395.2 626.2,395.2 626.2,393 623.8,393 623.8,391 621.4,391 621.4,387.8 619,387.8 619,389.2 616.6,389.2 616.6,386 614.2,386 614.2,385 611.8,385 611.8,383 609.4,383 609.4,380.8 607,380.8 607,380 604.6,380 604.6,376.8 602.2,376.8 602.2,377 599.8,377 599.8,375 597.4,375 597.4,374 595,374 595,372 592.6,372 592.6,371.2 590.2,371.2 590.2,369 587.8,369 587.8,368.2 585.4,368.2 585.4,366 583,366 583,362.8 580.6,362.8 580.6,362 578.2,362 578.2,361 575.8,361 575.8,359 573.4,359 573.4,357 571,357 571,356 568.6,356 568.6,352.8 566.2,352.8 566.2,353 563.8,353 563.8,351 561.4,351 561.4,349 559,349 559,349.2 556.6,349.2 556.6,347.2 554.2,347.2 554.2,342.8 551.8,342.8 551.8,344.2 549.4,344.2 549.4,341 547,341 547,339 544.6,339 544.6,338 542.2,338 542.2,337.2 539.8,337.2 539.8,334 537.4,334 537.4,333 535,333 535,331 532.6,331 532.6,329 530.2,329 530.2,327 527.8,327 527.8,326 525.4,326 525.4,324 523,324 523,322 520.6,322 520.6,321 518.2,321 518.2,319 515.8,319 515.8,317 513.4,317 513.4,316.2 511,316.2 511,312.8 508.6,312.8 508.6,312 506.2,312 506.2,310 503.8,310 503.8,309 501.4,309 501.4,307 499,307 499,306.2 496.6,306.2 496.6,305.2 494.2,305.2 494.2,303.2 491.8,303.2 491.8,301.2 489.4,301.2 489.4,299 487,299 487,297 484.6,297 484.6,296 482.2,296 482.2,294 479.8,294 479.8,293 477.4,293 477.4,291 475,291 475,290 472.6,290 472.6,288 470.2,288 470.2,287 467.8,287 467.8,286.2 465.4,286.2 465.4,284 463,284 463,284.2 460.6,284.2 460.6,282 458.2,282 458.2,281 455.8,281 455.8,279 453.4,279 453.4,275.8 451,275.8 451,275 448.6,275 448.6,276.2 446.2,276.2 446.2,275 443.8,275 443.8,275 441.4,275 441.4,273.8 439,273.8Z M1636.5,262 1638.9,262 1638.9,262 1641.3,262 1641.3,262 1643.7,262 1643.7,262 1646.1,262 1646.1,262 1648.5,262 1648.5,260.8 1650.9,260.8 1650.9,262 1653.3,262 1653.3,263 1655.7,263 1655.7,264 1658.1,264 1658.1,265 1660.5,265 1660.5,265.8 1662.9,265.8 1662.9,268 1665.3,268 1665.3,270 1667.7,270 1667.7,271 1670.1,271 1670.1,273 1672.5,273 1672.5,272.8 1674.9,272.8 1674.9,274.8 1677.3,274.8 1677.3,275.8 1679.7,275.8 1679.7,279 1682.1,279 1682.1,281 1684.5,281 1684.5,282 1686.9,282 1686.9,284 1689.3,284 1689.3,286.2 1691.7,286.2 1691.7,288.2 1694.1,288.2 1694.1,288 1696.5,288 1696.5,288.8 1698.9,288.8 1698.9,291 1701.3,291 1701.3,293 1703.7,293 1703.7,294 1706.1,294 1706.1,296 1708.5,296 1708.5,297 1710.9,297 1710.9,297.8 1713.3,297.8 1713.3,300 1715.7,300 1715.7,303.2 1718.1,303.2 1718.1,304.2 1720.5,304.2 1720.5,303.8 1722.9,303.8 1722.9,304.8 1725.3,304.8 1725.3,306.8 1727.7,306.8 1727.7,307.8 1730.1,307.8 1730.1,311 1732.5,311 1732.5,311.8 1734.9,311.8 1734.9,314 1737.3,314 1737.3,316 1739.7,316 1739.7,317 1742.1,317 1742.1,319 1744.5,319 1744.5,321 1746.9,321 1746.9,322 1749.3,322 1749.3,324 1751.7,324 1751.7,325 1754.1,325 1754.1,327 1756.5,327 1756.5,329 1758.9,329 1758.9,328.8 1761.3,328.8 1761.3,332 1763.7,332 1763.7,333 1766.1,333 1766.1,335 1768.5,335 1768.5,336 1770.9,336 1770.9,338 1773.3,338 1773.3,341.2 1775.7,341.2 1775.7,341 1778.1,341 1778.1,343 1780.5,343 1780.5,345.2 1782.9,345.2 1782.9,346 1785.3,346 1785.3,347 1787.7,347 1787.7,349 1790.1,349 1790.1,351 1792.5,351 1792.5,353.2 1794.9,353.2 1794.9,354 1797.3,354 1797.3,356.2 1799.7,356.2 1799.7,357 1802.1,357 1802.1,358 1804.5,358 1804.5,360 1806.9,360 1806.9,361 1809.3,361 1809.3,363 1811.7,363 1811.7,364 1814.1,364 1814.1,366 1816.5,366 1816.5,368 1818.9,368 1818.9,369 1821.3,369 1821.3,369.8 1823.7,369.8 1823.7,372 1826.1,372 1826.1,372.8 1828.5,372.8 1828.5,373.8 1830.9,373.8 1830.9,377 1833.3,377 1833.3,378 1835.7,378 1835.7,380 1838.1,380 1838.1,381 1840.5,381 1840.5,382 1842.9,382 1842.9,384 1845.3,384 1845.3,385 1847.7,385 1847.7,388.2 1850.1,388.2 1850.1,389.2 1852.5,389.2 1852.5,391.2 1854.9,391.2 1854.9,391 1857.3,391 1857.3,393 1859.7,393 1859.7,394 1862.1,394 1862.1,396 1864.5,396 1864.5,397 1866.9,397 1866.9,398 1869.3,398 1869.3,400 1871.7,400 1871.7,401 1874.1,401 1874.1,403 1876.5,403 1876.5,405 1878.9,405 1878.9,404.8 1881.3,404.8 1881.3,408 1883.7,408 1883.7,409 1886.1,409 1886.1,411 1888.5,411 1888.5,413.2 1890.9,413.2 1890.9,414 1893.3,414 1893.3,414.8 1895.7,414.8 1895.7,415.8 1898.1,415.8 1898.1,420.2 1900.5,420.2 1900.5,422.2 1902.9,422.2 1902.9,423 1905.3,423 1905.3,424 1907.7,424 1907.7,424.8 1910.1,424.8 1910.1,428 1912.5,428 1912.5,430.2 1914.9,430.2 1914.9,431 1917.3,431 1917.3,433 1919.7,433 1919.7,436.2 1922.1,436.2 1922.1,437 1924.5,437 1924.5,438 1926.9,438 1926.9,441.2 1929.3,441.2 1929.3,440.8 1931.7,440.8 1931.7,444 1934.1,444 1934.1,445 1936.5,445 1936.5,447 1938.9,447 1938.9,447.8 1941.3,447.8 1941.3,451 1943.7,451 1943.7,466 1941.3,466 1941.3,464 1938.9,464 1938.9,462 1936.5,462 1936.5,460 1934.1,460 1934.1,459 1931.7,459 1931.7,455.8 1929.3,455.8 1929.3,455 1926.9,455 1926.9,454.2 1924.5,454.2 1924.5,452 1922.1,452 1922.1,450 1919.7,450 1919.7,448 1917.3,448 1917.3,444.8 1914.9,444.8 1914.9,445 1912.5,445 1912.5,443 1910.1,443 1910.1,439.8 1907.7,439.8 1907.7,439 1905.3,439 1905.3,436.8 1902.9,436.8 1902.9,436 1900.5,436 1900.5,434 1898.1,434 1898.1,432 1895.7,432 1895.7,429.8 1893.3,429.8 1893.3,429 1890.9,429 1890.9,425.8 1888.5,425.8 1888.5,426 1886.1,426 1886.1,424 1883.7,424 1883.7,422 1881.3,422 1881.3,421 1878.9,421 1878.9,419 1876.5,419 1876.5,418 1874.1,418 1874.1,416 1871.7,416 1871.7,414 1869.3,414 1869.3,413 1866.9,413 1866.9,411 1864.5,411 1864.5,410 1862.1,410 1862.1,408 1859.7,408 1859.7,407 1857.3,407 1857.3,405 1854.9,405 1854.9,405.2 1852.5,405.2 1852.5,401.8 1850.1,401.8 1850.1,401 1847.7,401 1847.7,401.2 1845.3,401.2 1845.3,398 1842.9,398 1842.9,397 1840.5,397 1840.5,395 1838.1,395 1838.1,394 1835.7,394 1835.7,392 1833.3,392 1833.3,391 1830.9,391 1830.9,389 1828.5,389 1828.5,388 1826.1,388 1826.1,387 1823.7,387 1823.7,383.8 1821.3,383.8 1821.3,384 1818.9,384 1818.9,382 1816.5,382 1816.5,380 1814.1,380 1814.1,377.8 1811.7,377.8 1811.7,375.8 1809.3,375.8 1809.3,376 1806.9,376 1806.9,375.2 1804.5,375.2 1804.5,373 1802.1,373 1802.1,369.8 1799.7,369.8 1799.7,371.2 1797.3,371.2 1797.3,368 1794.9,368 1794.9,367 1792.5,367 1792.5,365 1790.1,365 1790.1,364 1787.7,364 1787.7,363.2 1785.3,363.2 1785.3,361.2 1782.9,361.2 1782.9,359 1780.5,359 1780.5,355.8 1778.1,355.8 1778.1,356 1775.7,356 1775.7,354 1773.3,354 1773.3,353 1770.9,353 1770.9,352.2 1768.5,352.2 1768.5,350.2 1766.1,350.2 1766.1,348 1763.7,348 1763.7,344.8 1761.3,344.8 1761.3,346.2 1758.9,346.2 1758.9,341.8 1756.5,341.8 1756.5,343.2 1754.1,343.2 1754.1,341.2 1751.7,341.2 1751.7,336.8 1749.3,336.8 1749.3,337 1746.9,337 1746.9,335 1744.5,335 1744.5,334 1742.1,334 1742.1,330.8 1739.7,330.8 1739.7,330 1737.3,330 1737.3,329 1734.9,329 1734.9,327 1732.5,327 1732.5,326 1730.1,326 1730.1,324 1727.7,324 1727.7,324.2 1725.3,324.2 1725.3,321 1722.9,321 1722.9,319 1720.5,319 1720.5,318 1718.1,318 1718.1,316 1715.7,316 1715.7,315 1713.3,315 1713.3,313 1710.9,313 1710.9,312 1708.5,312 1708.5,310 1706.1,310 1706.1,309 1703.7,309 1703.7,307 1701.3,307 1701.3,306 1698.9,306 1698.9,304 1696.5,304 1696.5,301.8 1694.1,301.8 1694.1,302.2 1691.7,302.2 1691.7,300 1689.3,300 1689.3,299.2 1686.9,299.2 1686.9,297 1684.5,297 1684.5,296.2 1682.1,296.2 1682.1,292.8 1679.7,292.8 1679.7,292 1677.3,292 1677.3,291 1674.9,291 1674.9,287.8 1672.5,287.8 1672.5,287 1670.1,287 1670.1,286 1667.7,286 1667.7,285.2 1665.3,285.2 1665.3,283 1662.9,283 1662.9,281 1660.5,281 1660.5,280 1658.1,280 1658.1,278 1655.7,278 1655.7,276 1653.3,276 1653.3,275 1650.9,275 1650.9,273.8 1648.5,273.8 1648.5,275 1646.1,275 1646.1,274 1643.7,274 1643.7,274 1641.3,274 1641.3,272.8 1638.9,272.8 1638.9,272.8 1636.5,272.8Z M436.1,262 L439.7,262 L442.8,548 L439.2,548Z M437,546 L440.6,546 L443.5,819 L439.9,819Z M1636.8,261.5 L1640.4,261.5 L1639.8,370 L1636.2,370Z M1633.7,368 L1637.3,368 L1634.9,823 L1631.3,823Z" fill="#f8121c"/>
<path d="M418.5,584.6h22v3.2h-22z M428,574.6h3.4v23h-3.4z" fill="#f4f4e4"/>
<path d="M1619,585.2h31v3.2h-31z" fill="#f4f4e4"/>
<ellipse cx="99.4" cy="63.4" rx="15.6" ry="12.6" fill="none" stroke="#f2b236" stroke-width="7"/>
<g fill="none" stroke="#0a0f3c" stroke-width="6.8" stroke-linejoin="round">
<path d="M125.5,48.5 V66 Q125.5,75 134,75 Q143,75 143,66 V50 M143,66 Q143,75 151.5,75 Q160.5,75 160.5,66 V48.5"/>
<ellipse cx="189.7" cy="62.8" rx="17" ry="12"/>
<path d="M219,78 V60.5 Q219,51 230.5,51 Q242,51 242,60.5 V78"/>
</g>
<rect x="349.5" y="42" width="193" height="37.4" rx="18.7" fill="#82ea10"/>
<text x="396" y="72" font-family="'Liberation Mono', monospace" font-size="29" textLength="91" lengthAdjust="spacingAndGlyphs" fill="#12a226">Trig</text>
<path d="M676,39.4 L1376,37.8 L1376,43 L676,44.6Z" fill="#1a5cb4"/>
<path d="M682,42.6 L1369.5,41 A18.3,18.3 0 0 1 1369.5,77.6 L682,79.2 A18.3,18.3 0 0 1 682,42.6Z" fill="#0c0808"/>
<line x1="684.5" y1="61.9" x2="1368" y2="60.4" stroke="#ecd820" stroke-width="5"/>
<path d="M767.6,45.2h7.6v2.8h-2.8v28.4h2.8v2.8h-7.6z" fill="#e8e8d8"/>
<path d="M1283.4,44.6h-7.6v2.8h2.8v27.6h-2.8v2.8h7.6z" fill="#e8e8d8"/>
<path d="M852,45h13v5h-4.2v7h-4.6v-7h-4.2z" fill="#f022d4"/>
<rect x="1413.5" y="40.6" width="264.5" height="36.8" rx="18.4" fill="#0c0808"/>
<path d="M1424.5,47.5 h29 v21 l-8,6 h-13 l-8,-6z" fill="#180c40" stroke="#8a48f0" stroke-width="3.2" stroke-linejoin="round"/>
<path d="M1430,52h18v4.6h-6.4v13h-5.2v-13h-6.4z" fill="#f0ecff"/>
<text x="1461.6" y="74.2" font-family="'Liberation Mono', monospace" font-weight="bold" font-size="35.7" textLength="164.4" lengthAdjust="spacingAndGlyphs" fill="#fcfce8" stroke="#fcfce8" stroke-width="0.3">9.760ms</text>
<rect x="1718" y="38.4" width="144.5" height="38.4" rx="19.2" fill="#0c0808"/>
<text x="1731.5" y="72" font-family="'Liberation Mono', monospace" font-weight="bold" font-size="34.9" textLength="113.5" lengthAdjust="spacingAndGlyphs" fill="#fcfce8" stroke="#fcfce8" stroke-width="0.3">15:22</text>
<path d="M1960,40h8.5v-9h7.2v9h7.3v32h-23z" fill="#0b0b16"/>
<path d="M424.4,87.5 h28.4 v18 l-7.5,6.6 h-13.4 l-7.5,-6.6z" fill="#150a3a" stroke="#8a48f0" stroke-width="3.2" stroke-linejoin="round"/>
<path d="M430,91.6h17.4v4.6h-6.2v11.6h-5v-11.6h-6.2z" fill="#f0ecff"/>
<path d="M69,570 h31 l10,16.2 l-10,16.2 h-31z" fill="#160808" stroke="#f0161e" stroke-width="3.6" stroke-linejoin="round"/>
<path d="M79.5,580.5 l6.5,-4.4 h5 v21.5 h-6 v-14.8 l-5.5,2.6z" fill="#f0161e"/>
<path d="M1952.2,586.5 L1980.7,576.2 L1980.7,599Z" fill="#8e62e4"/>
<rect x="133.7" y="897.3" width="445.5" height="181.7" rx="9" fill="#100809" stroke="#5cc2e2" stroke-width="6"/>
<path d="M152.5,930 L163.5,917 L174.5,930 Z M159.2,926.4 L163.5,921.4 L167.8,926.4 Z" fill="#fcfce8" fill-rule="evenodd"/>
<text x="175.4" y="930" font-family="'Liberation Mono', monospace" font-weight="bold" font-size="31.1" textLength="210.8" lengthAdjust="spacingAndGlyphs" fill="#fcfce8" stroke="#fcfce8" stroke-width="0.3">x:8.520ms</text>
<text x="155.6" y="973.9" font-family="'Liberation Mono', monospace" font-weight="bold" font-size="31.1" textLength="44.8" lengthAdjust="spacingAndGlyphs" fill="#fcfce8" stroke="#fcfce8" stroke-width="0.3">1/</text>
<path d="M202.9,973.9 L213.9,960.9 L224.9,973.9 Z M209.6,970.3 L213.9,965.3 L218.2,970.3 Z" fill="#fcfce8" fill-rule="evenodd"/>
<text x="225.9" y="973.9" font-family="'Liberation Mono', monospace" font-weight="bold" font-size="31.1" textLength="209" lengthAdjust="spacingAndGlyphs" fill="#fcfce8" stroke="#fcfce8" stroke-width="0.3">x:117.4HZ</text>
<text x="152" y="1020.7" font-family="'Liberation Mono', monospace" font-weight="bold" font-size="31.1" textLength="235.3" lengthAdjust="spacingAndGlyphs" fill="#fcfce8" stroke="#fcfce8" stroke-width="0.3">x1:0.000ns</text>
<text x="152" y="1064.2" font-family="'Liberation Mono', monospace" font-weight="bold" font-size="31.1" textLength="259.8" lengthAdjust="spacingAndGlyphs" fill="#fcfce8" stroke="#fcfce8" stroke-width="0.3">x2:-8.520ms</text>
<rect x="1621.8" y="1046.5" width="304.8" height="35" rx="7" fill="#100809" stroke="#7fd6d0" stroke-width="4"/>
<ellipse cx="1644.6" cy="1065.5" rx="19.6" ry="14.4" fill="#f0141c"/>
<path d="M1642,1059.2 l3.6,-2.2 h2.6 v17 h-3.2 v-12.6 l-3,1.4z" fill="#7a1010"/>
<text x="1673" y="1075.7" font-family="'Liberation Mono', monospace" font-weight="bold" font-size="29.6" textLength="211.8" lengthAdjust="spacingAndGlyphs" fill="#fcfce8" stroke="#fcfce8" stroke-width="0.3">50.5563Hz</text>
<rect x="86" y="1112" width="474" height="18" fill="#14557c"/>
<rect x="77.4" y="1083.4" width="490.5" height="36" rx="12" fill="#0e0808"/>
<rect x="78.6" y="1123.5" width="489.4" height="34.8" rx="12" fill="#0e0808"/>
<ellipse cx="100" cy="1103" rx="17.6" ry="16" fill="#f0141c"/>
<path d="M96.5,1096 l4,-2.6 h3 v19.6 h-3.6 v-14.8 l-3.4,1.6z" fill="#7a1010"/>
<ellipse cx="100.4" cy="1141.6" rx="17.6" ry="16" fill="#ecec1c"/>
<text x="100.6" y="1150" font-family="'Liberation Sans', sans-serif" font-size="25" text-anchor="middle" fill="#5a5a10">2</text>
<text x="120" y="1114" font-family="'Liberation Mono', monospace" font-weight="bold" font-size="31.1" textLength="64.3" lengthAdjust="spacingAndGlyphs" fill="#f2161e" stroke="#f2161e" stroke-width="0.3">1v~</text>
<text x="327.3" y="1114.4" font-family="'Liberation Mono', monospace" font-weight="bold" font-size="31.1" textLength="160.4" lengthAdjust="spacingAndGlyphs" fill="#f2161e" stroke="#f2161e" stroke-width="0.3">0.00div</text>
<text x="120" y="1152.9" font-family="'Liberation Mono', monospace" font-weight="bold" font-size="31.1" textLength="157.9" lengthAdjust="spacingAndGlyphs" fill="#f0f024" stroke="#f0f024" stroke-width="0.3">5.00mv~</text>
<text x="327.3" y="1153.3" font-family="'Liberation Mono', monospace" font-weight="bold" font-size="31.1" textLength="160.4" lengthAdjust="spacingAndGlyphs" fill="#f0f024" stroke="#f0f024" stroke-width="0.3">0.00div</text>
<rect x="577.4" y="1085.6" width="250" height="75" rx="11" fill="#0e0808"/>
<text x="600" y="1113.7" font-family="'Liberation Mono', monospace" font-weight="bold" font-size="31.1" textLength="200.6" lengthAdjust="spacingAndGlyphs" fill="#fcfce8" stroke="#fcfce8" stroke-width="0.3">(250KS/s)</text>
<text x="594.8" y="1152.5" font-family="'Liberation Mono', monospace" font-weight="bold" font-size="32.6" textLength="211.2" lengthAdjust="spacingAndGlyphs" fill="#fcfce8" stroke="#fcfce8" stroke-width="0.3">Depth:10K</text>
<rect x="834.5" y="1086.5" width="237" height="34" rx="17" fill="#0e0808"/>
<text x="866.8" y="1114.4" font-family="'Liberation Mono', monospace" font-weight="bold" font-size="31.1" textLength="164.9" lengthAdjust="spacingAndGlyphs" fill="#fcfce8" stroke="#fcfce8" stroke-width="0.3">M:2.0ms</text>
<rect x="1665.5" y="1089.2" width="311" height="34.4" rx="17.2" fill="#0e0808"/>
<ellipse cx="1688.4" cy="1105.8" rx="20" ry="15" fill="#f0141c"/>
<path d="M1685.6,1099.4 l3.6,-2.2 h2.6 v17 h-3.2 v-12.6 l-3,1.4z" fill="#7a1010"/>
<path d="M1713,1120.4 H1733 L1745,1094.6 H1763" fill="none" stroke="#f8f8e8" stroke-width="3.2"/>
<text x="1766.6" y="1118.4" font-family="'Liberation Mono', monospace" font-weight="bold" font-size="30.1" textLength="141" lengthAdjust="spacingAndGlyphs" fill="#fcfce8" stroke="#fcfce8" stroke-width="0.3">0.00mv</text>
<rect x="1052" y="1129" width="13" height="75" fill="#127cce"/>
<path d="M844.5,1200 V1132.5 Q844.5,1127.5 849.5,1127.5 H1050 Q1055,1127.5 1055,1132.5 V1200Z" fill="#1ea9f3"/>
<path d="M845.8,1200 V1133.5 Q845.8,1128.8 850.5,1128.8 H1050" fill="none" stroke="#5cc6fa" stroke-width="2.6"/>
<path d="M1053.5,1132.5 V1200" fill="none" stroke="#1272c4" stroke-width="3"/>
<path d="M1062.8,1200 V1134 Q1062.8,1129 1067.8,1129 H1273.5 Q1278.5,1129 1278.5,1134 V1200Z" fill="#1ea9f3"/>
<path d="M1064.1,1200 V1135 Q1064.1,1130.3 1068.8,1130.3 H1273.5" fill="none" stroke="#5cc6fa" stroke-width="2.6"/>
<path d="M1277,1134 V1200" fill="none" stroke="#1272c4" stroke-width="3"/>
<text x="899.5" y="1168.3" font-family="'Liberation Mono', monospace" font-size="30" textLength="90.5" lengthAdjust="spacingAndGlyphs" fill="#1842b2">Type</text>
<text x="1097" y="1168.8" font-family="'Liberation Mono', monospace" font-size="30" textLength="138" lengthAdjust="spacingAndGlyphs" fill="#1842b2">Source</text>
<rect x="898" y="1185.4" width="96.5" height="10" fill="#f4f4f0"/>
<rect x="1074.7" y="1187" width="72.8" height="10" fill="#f4f4f0"/>
<g fill="#857379" opacity="0.8"><ellipse cx="799.7" cy="223.3" rx="4.3" ry="3.7"/><ellipse cx="584.7" cy="342.6" rx="3.2" ry="2.7"/><ellipse cx="1471.5" cy="717.8" rx="2.8" ry="2.4"/><ellipse cx="1407.5" cy="1009.5" rx="3.2" ry="2.7"/><ellipse cx="514.5" cy="887.6" rx="3" ry="2.5"/><ellipse cx="256.6" cy="830.3" rx="2.2" ry="1.9"/><ellipse cx="272.8" cy="830" rx="2.2" ry="1.9"/><ellipse cx="452.5" cy="922.5" rx="2.4" ry="2"/><ellipse cx="479" cy="962.5" rx="2" ry="1.7"/><ellipse cx="437.5" cy="1000" rx="2.8" ry="2.4"/><ellipse cx="190" cy="937.5" rx="2" ry="1.7"/><ellipse cx="1608.9" cy="736.5" rx="2.2" ry="1.9"/><ellipse cx="1326.7" cy="632.9" rx="1.6" ry="1.4"/><ellipse cx="727.5" cy="478.6" rx="2.4" ry="2"/><ellipse cx="777.9" cy="498.8" rx="2.4" ry="2"/><ellipse cx="820.9" cy="399.7" rx="1.8" ry="1.5"/><ellipse cx="562.9" cy="573.4" rx="2" ry="1.7"/><ellipse cx="527" cy="290" rx="1.8" ry="1.5"/><ellipse cx="455.7" cy="838.8" rx="2.8" ry="2.4"/><ellipse cx="470.8" cy="858" rx="2" ry="1.7"/></g>
<ellipse cx="229" cy="1106" rx="3" ry="2.6" fill="#5c5c66"/>
</g>
</svg>
</body></html>
